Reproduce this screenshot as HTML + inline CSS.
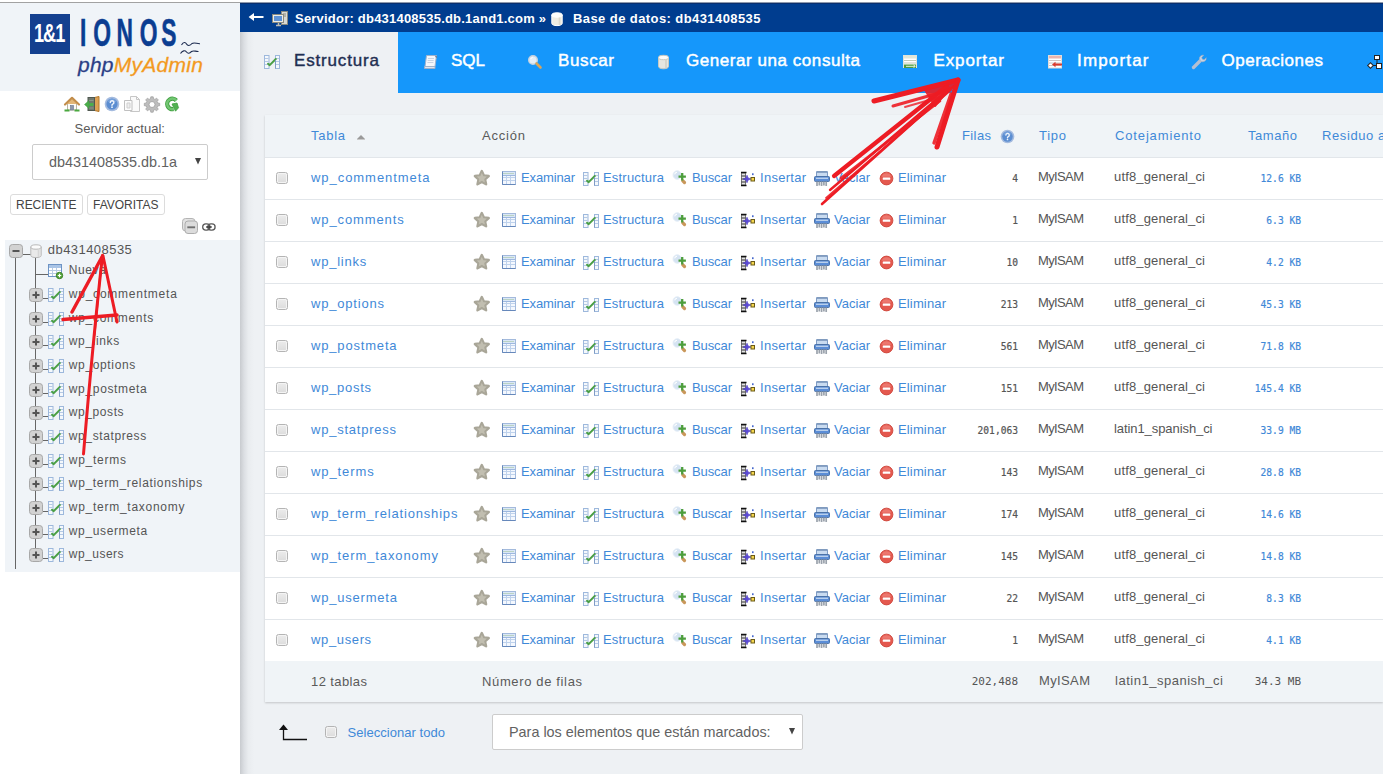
<!DOCTYPE html>
<html lang="es"><head><meta charset="utf-8"><title>phpMyAdmin</title>
<style>
html,body{margin:0;padding:0}
body{width:1383px;height:774px;overflow:hidden;position:relative;background:#fff;font-family:"Liberation Sans",sans-serif}
.t{position:absolute;white-space:pre;font-family:"Liberation Sans",sans-serif}
.m{font-family:"DejaVu Sans Mono","Liberation Mono",monospace}
.i{position:absolute;overflow:visible}
.b{position:absolute}
a{color:inherit;text-decoration:none}
.cb{position:absolute;width:10px;height:10px;border:1px solid #b4b4b4;border-radius:2.500px;background:linear-gradient(#ececec,#dcdcdc);box-shadow:inset 0 0 0 1px #f4f4f4}
</style></head><body>

<aside id="pma_navigation">
<div class="b" style="left:0;top:2px;width:240px;height:1px;background:#a2a2a2"></div>
<div class="b" style="left:240px;top:2px;width:1143px;height:1px;background:#8e99ad"></div>
<div class="b" style="left:0;top:3px;width:240px;height:87.500px;background:#f0f4f8"></div>
<div class="b" style="left:29.500px;top:14px;width:40.500px;height:40px;background:#14408f"></div>
<span class="t " style="left:33.5px;top:18px;font-size:26px;color:#fff;line-height:30px;letter-spacing:-1.5px;font-weight:700;transform:scaleX(.7);transform-origin:0 50%;">1&amp;1</span>
<span class="t " style="left:79.7px;top:11px;font-size:38px;color:#0b3d91;line-height:44px;font-weight:700;transform:scaleX(.6);transform-origin:0 50%;-webkit-text-stroke:.6px #0b3d91;"><span style="letter-spacing:11.500px">I</span><span style="letter-spacing:9.200px">O</span><span style="letter-spacing:11.500px">N</span><span style="letter-spacing:6.100px">O</span>S</span>
<svg class="i" style="left:180px;top:39.5px;" width="24" height="18" viewBox="0 0 24 18"><path d="M1.500 5c2-3.500 4-3 5-1s3.500 2 5.500-.5c2.500-1.500 5 .5 8 .2M.5 13.500c2-3 4.500-3.500 6-1.500s3 1.500 5-.5c2-1.500 4 .2 7 0" fill="none" stroke="#1d2b50" stroke-width="1.100"/></svg>
<span class="t " style="left:78px;top:53px;font-size:21px;color:#333;line-height:24px;letter-spacing:0.25px;-webkit-text-stroke:.3px;"><i style="color:#2b3f86">php</i><i style="color:#f39a1f">MyAdmin</i></span>
<svg class="i" style="left:64px;top:96px;" width="16" height="16" viewBox="0 0 16 16"><path d="M3.500 8v6h9V8" fill="#fbfaf6" stroke="#b9b3a3" stroke-width="1"/><path d="M8 2.500L2.500 8h11z" fill="#e3b676"/><path d="M1 8.500L8 1.800l7 6.700" fill="none" stroke="#c28d4a" stroke-width="2.200" stroke-linejoin="round" stroke-linecap="round"/><rect x="6.500" y="9.500" width="3" height="4.500" fill="#8d97ab" stroke="#6a748a" stroke-width=".6"/><path d="M.5 14.500h5M10.500 14.500h5" stroke="#4aa83f" stroke-width="2"/></svg>
<svg class="i" style="left:84px;top:96px;" width="16" height="16" viewBox="0 0 16 16"><path d="M10.500 1.500l4.500-1v15l-4.500-1z" fill="#dea255" stroke="#b3782a" stroke-width="1"/><rect x="4" y="1.500" width="6.500" height="13" fill="#6f786f" stroke="#4f584f" stroke-width="1"/><path d="M5 4.500h4.500M5 12h4.500" stroke="#8c968c" stroke-width="1"/><path d="M2 8.500h7.500" stroke="#4cae4c" stroke-width="3"/><path d="M5 4.500L.5 8.500 5 12.500z" fill="#4cae4c" stroke="#3a963a" stroke-width=".5"/></svg>
<svg class="i" style="left:103.5px;top:96px;" width="16" height="16" viewBox="0 0 16 16"><circle cx="8" cy="8" r="7.300" fill="#a4bbdf"/><circle cx="8" cy="8" r="5.600" fill="#5b8dd1"/><path d="M3.500 6a4.800 4.800 0 0 1 9 0" fill="#7fa8e0" opacity=".7"/><path d="M6.300 6.400a1.800 1.800 0 1 1 2.500 1.700c-.6.300-.8.600-.8 1.200" fill="none" stroke="#eef4fc" stroke-width="1.500" stroke-linecap="round"/><circle cx="8" cy="11.200" r=".9" fill="#eef4fc"/></svg>
<svg class="i" style="left:123.5px;top:96px;" width="16" height="16" viewBox="0 0 16 16"><path d="M6.500.5h6l3 3v12h-9z" fill="#fafafa" stroke="#c6c6c6" stroke-width="1"/><path d="M12.500.5v3h3" fill="none" stroke="#c6c6c6"/><path d="M.5 4.500h7.500v10h-7.500z" fill="#fcfcfc" stroke="#c0c0c0" stroke-width="1"/><path d="M3 7h3v5H3z" fill="#eee" stroke="#cfcfcf" stroke-width="1"/></svg>
<svg class="i" style="left:143.5px;top:96px;" width="16" height="16" viewBox="0 0 16 16"><g fill="#bdbdbd" stroke="#9c9c9c" stroke-width=".7"><path d="M6.800.8h2.400l.4 2 1.300.6 1.700-1.200 1.700 1.700-1.200 1.700.6 1.300 2 .4v2.400l-2 .4-.6 1.300 1.200 1.700-1.700 1.700-1.700-1.200-1.300.6-.4 2H6.800l-.4-2-1.300-.6-1.700 1.200-1.700-1.700 1.200-1.700-.6-1.300-2-.4V7.300l2-.4.6-1.300-1.200-1.700 1.700-1.700 1.700 1.200 1.300-.6z"/></g><circle cx="8" cy="8.500" r="3" fill="#fff" stroke="#9c9c9c" stroke-width=".8"/></svg>
<svg class="i" style="left:164px;top:96px;" width="16" height="16" viewBox="0 0 16 16"><path d="M12.300 4.500A5.200 5.200 0 1 0 9.500 13" fill="none" stroke="#3f9e3f" stroke-width="4.200" stroke-linecap="butt"/><path d="M12.300 4.500A5.200 5.200 0 1 0 9.500 13" fill="none" stroke="#72c672" stroke-width="2.400" stroke-linecap="butt"/><path d="M8 8l5-1 1.500 4.800-3 3.400z" fill="#52b152" stroke="#3f9e3f" stroke-width=".8"/></svg>
<span class="t " style="left:74.5px;top:121px;font-size:13px;color:#5a5a5a;line-height:16px;letter-spacing:0.011px;">Servidor actual:</span>
<div class="b" style="left:32px;top:144px;width:174px;height:34px;border:1px solid #ccc;border-radius:2px;background:#fff"></div>
<span class="t " style="left:49px;top:153px;font-size:14.4px;color:#626262;line-height:18px;">db431408535.db.1a</span>
<svg class="i" style="left:194.5px;top:158px;" width="6" height="6.5" viewBox="0 0 6 6.5"><path d="M0 0h6L3 6.500z" fill="#444"/></svg>
<div class="b" style="left:10px;top:194px;width:71px;height:19px;border:1px solid #dcdcdc;border-radius:3px;background:#fff"></div>
<div class="b" style="left:87px;top:194px;width:76px;height:19px;border:1px solid #dcdcdc;border-radius:3px;background:#fff"></div>
<span class="t " style="left:16px;top:197.8px;font-size:12px;color:#444;line-height:15px;letter-spacing:-0.027px;">RECIENTE</span>
<span class="t " style="left:93px;top:197.8px;font-size:12px;color:#444;line-height:15px;letter-spacing:-0.01px;">FAVORITAS</span>
<svg class="i" style="left:182px;top:217.7px;" width="16" height="16" viewBox="0 0 16 16"><rect x=".5" y=".5" width="12.500" height="12.500" rx="3" fill="#e2e2e2" stroke="#b4b4b4"/><rect x="3" y="3" width="12.500" height="12.500" rx="3" fill="#dcdcdc" stroke="#adadad"/><path d="M5.300 9.300h7.800" stroke="#707070" stroke-width="1.900"/></svg>
<svg class="i" style="left:202px;top:222.6px;" width="13.8" height="8" viewBox="0 0 13.8 8"><rect x=".7" y=".8" width="7.200" height="6.400" rx="3.100" fill="none" stroke="#5a5a5a" stroke-width="1.300"/><rect x="5.900" y=".8" width="7.200" height="6.400" rx="3.100" fill="none" stroke="#5a5a5a" stroke-width="1.300"/><path d="M4.200 4h5.500" stroke="#333" stroke-width="1.500"/></svg>
<div class="b" style="left:5px;top:240px;width:235px;height:331.500px;background:#f0f4f8"></div>
<div class="b" style="left:15px;top:257px;width:1px;height:312px;background:#666"></div>
<div class="b" style="left:35px;top:257px;width:1px;height:297px;background:#666"></div>
<div class="b" style="left:23px;top:253.500px;width:8px;height:1px;background:#666"></div>
<svg class="i" style="left:9px;top:244px;" width="14" height="14" viewBox="0 0 14 14"><rect x=".5" y=".5" width="13" height="13" rx="3" fill="#d2d2d2" stroke="#a8a8a8"/><path d="M3.500 7h7" stroke="#555" stroke-width="2"/></svg>
<svg class="i" style="left:30px;top:243.8px;" width="12" height="14" viewBox="0 0 12 14"><path d="M.8 3v8.500c0 1.300 2.400 2.100 5.200 2.100s5.200-.8 5.200-2.100V3z" fill="#e9e9e9" stroke="#b9b9b9" stroke-width="1"/><ellipse cx="6" cy="3" rx="5.200" ry="2.200" fill="#fbfbfb" stroke="#b9b9b9" stroke-width="1"/><path d="M8.500 5.500v7.500" stroke="#d6d6d6" stroke-width="1.600"/></svg>
<span class="t " style="left:47.8px;top:241.8px;font-size:13px;color:#555;line-height:16px;letter-spacing:0.447px;">db431408535</span>
<div class="b" style="left:36px;top:274px;width:12px;height:1px;background:#666"></div>
<svg class="i" style="left:48px;top:263.5px;" width="15" height="15" viewBox="0 0 15 15"><rect x=".5" y=".5" width="13" height="12" fill="#fff" stroke="#6d93c4"/><rect x="1" y="1" width="12" height="3" fill="#a9c4e6"/><path d="M1 6.500h12M1 9.500h12M4.500 4v8M8.500 4v8" stroke="#b8cbe3" stroke-width="1"/><circle cx="11.500" cy="11.500" r="3.200" fill="#58a83d" stroke="#3b7f27" stroke-width="1"/><path d="M11.500 9.800v3.400M9.800 11.500h3.400" stroke="#fff" stroke-width="1.200"/></svg>
<span class="t " style="left:68.8px;top:262.4px;font-size:12px;color:#555;line-height:16px;letter-spacing:0.6px;">Nueva</span>
<svg class="i" style="left:29px;top:288.0px;" width="14" height="14" viewBox="0 0 14 14"><rect x=".5" y=".5" width="13" height="13" rx="3" fill="#d2d2d2" stroke="#a8a8a8"/><path d="M3.500 7h7M7 3.500v7" stroke="#555" stroke-width="2"/></svg>
<div class="b" style="left:43px;top:298px;width:5px;height:1px;background:#666"></div>
<svg class="i" style="left:47.5px;top:287.0px;" width="16" height="16" viewBox="0 0 16 16"><rect x=".5" y="1.500" width="4.500" height="13" fill="#f4f8fc" stroke="#9db8dc" stroke-width="1"/><rect x="11.500" y="1.500" width="4" height="13" fill="#f4f8fc" stroke="#9db8dc" stroke-width="1"/><path d="M1 4.500h3.500M1 7.500h3.500M1 10.500h3.500M12 4.500h3M12 7.500h3M12 10.500h3" stroke="#b5c9e4" stroke-width="1"/><path d="M4 9.800l1.700 1.300L11.800 5" fill="none" stroke="#4a9f45" stroke-width="2" stroke-linecap="round" stroke-linejoin="round"/><path d="M11.500 6v8.500" stroke="#7f9cc4" stroke-width="1"/></svg>
<span class="t " style="left:68.8px;top:286.0px;font-size:12px;color:#555;line-height:16px;letter-spacing:0.769px;">wp_commentmeta</span>
<svg class="i" style="left:29px;top:311.6px;" width="14" height="14" viewBox="0 0 14 14"><rect x=".5" y=".5" width="13" height="13" rx="3" fill="#d2d2d2" stroke="#a8a8a8"/><path d="M3.500 7h7M7 3.500v7" stroke="#555" stroke-width="2"/></svg>
<div class="b" style="left:43px;top:322px;width:5px;height:1px;background:#666"></div>
<svg class="i" style="left:47.5px;top:310.6px;" width="16" height="16" viewBox="0 0 16 16"><rect x=".5" y="1.500" width="4.500" height="13" fill="#f4f8fc" stroke="#9db8dc" stroke-width="1"/><rect x="11.500" y="1.500" width="4" height="13" fill="#f4f8fc" stroke="#9db8dc" stroke-width="1"/><path d="M1 4.500h3.500M1 7.500h3.500M1 10.500h3.500M12 4.500h3M12 7.500h3M12 10.500h3" stroke="#b5c9e4" stroke-width="1"/><path d="M4 9.800l1.700 1.300L11.800 5" fill="none" stroke="#4a9f45" stroke-width="2" stroke-linecap="round" stroke-linejoin="round"/><path d="M11.500 6v8.500" stroke="#7f9cc4" stroke-width="1"/></svg>
<span class="t " style="left:68.8px;top:309.6px;font-size:12px;color:#555;line-height:16px;letter-spacing:0.707px;">wp_comments</span>
<svg class="i" style="left:29px;top:335.3px;" width="14" height="14" viewBox="0 0 14 14"><rect x=".5" y=".5" width="13" height="13" rx="3" fill="#d2d2d2" stroke="#a8a8a8"/><path d="M3.500 7h7M7 3.500v7" stroke="#555" stroke-width="2"/></svg>
<div class="b" style="left:43px;top:345px;width:5px;height:1px;background:#666"></div>
<svg class="i" style="left:47.5px;top:334.3px;" width="16" height="16" viewBox="0 0 16 16"><rect x=".5" y="1.500" width="4.500" height="13" fill="#f4f8fc" stroke="#9db8dc" stroke-width="1"/><rect x="11.500" y="1.500" width="4" height="13" fill="#f4f8fc" stroke="#9db8dc" stroke-width="1"/><path d="M1 4.500h3.500M1 7.500h3.500M1 10.500h3.500M12 4.500h3M12 7.500h3M12 10.500h3" stroke="#b5c9e4" stroke-width="1"/><path d="M4 9.800l1.700 1.300L11.800 5" fill="none" stroke="#4a9f45" stroke-width="2" stroke-linecap="round" stroke-linejoin="round"/><path d="M11.500 6v8.500" stroke="#7f9cc4" stroke-width="1"/></svg>
<span class="t " style="left:68.8px;top:333.3px;font-size:12px;color:#555;line-height:16px;letter-spacing:0.621px;">wp_links</span>
<svg class="i" style="left:29px;top:358.9px;" width="14" height="14" viewBox="0 0 14 14"><rect x=".5" y=".5" width="13" height="13" rx="3" fill="#d2d2d2" stroke="#a8a8a8"/><path d="M3.500 7h7M7 3.500v7" stroke="#555" stroke-width="2"/></svg>
<div class="b" style="left:43px;top:369px;width:5px;height:1px;background:#666"></div>
<svg class="i" style="left:47.5px;top:357.9px;" width="16" height="16" viewBox="0 0 16 16"><rect x=".5" y="1.500" width="4.500" height="13" fill="#f4f8fc" stroke="#9db8dc" stroke-width="1"/><rect x="11.500" y="1.500" width="4" height="13" fill="#f4f8fc" stroke="#9db8dc" stroke-width="1"/><path d="M1 4.500h3.500M1 7.500h3.500M1 10.500h3.500M12 4.500h3M12 7.500h3M12 10.500h3" stroke="#b5c9e4" stroke-width="1"/><path d="M4 9.800l1.700 1.300L11.800 5" fill="none" stroke="#4a9f45" stroke-width="2" stroke-linecap="round" stroke-linejoin="round"/><path d="M11.500 6v8.500" stroke="#7f9cc4" stroke-width="1"/></svg>
<span class="t " style="left:68.8px;top:356.9px;font-size:12px;color:#555;line-height:16px;letter-spacing:0.643px;">wp_options</span>
<svg class="i" style="left:29px;top:382.6px;" width="14" height="14" viewBox="0 0 14 14"><rect x=".5" y=".5" width="13" height="13" rx="3" fill="#d2d2d2" stroke="#a8a8a8"/><path d="M3.500 7h7M7 3.500v7" stroke="#555" stroke-width="2"/></svg>
<div class="b" style="left:43px;top:393px;width:5px;height:1px;background:#666"></div>
<svg class="i" style="left:47.5px;top:381.6px;" width="16" height="16" viewBox="0 0 16 16"><rect x=".5" y="1.500" width="4.500" height="13" fill="#f4f8fc" stroke="#9db8dc" stroke-width="1"/><rect x="11.500" y="1.500" width="4" height="13" fill="#f4f8fc" stroke="#9db8dc" stroke-width="1"/><path d="M1 4.500h3.500M1 7.500h3.500M1 10.500h3.500M12 4.500h3M12 7.500h3M12 10.500h3" stroke="#b5c9e4" stroke-width="1"/><path d="M4 9.800l1.700 1.300L11.800 5" fill="none" stroke="#4a9f45" stroke-width="2" stroke-linecap="round" stroke-linejoin="round"/><path d="M11.500 6v8.500" stroke="#7f9cc4" stroke-width="1"/></svg>
<span class="t " style="left:68.8px;top:380.6px;font-size:12px;color:#555;line-height:16px;letter-spacing:0.661px;">wp_postmeta</span>
<svg class="i" style="left:29px;top:406.2px;" width="14" height="14" viewBox="0 0 14 14"><rect x=".5" y=".5" width="13" height="13" rx="3" fill="#d2d2d2" stroke="#a8a8a8"/><path d="M3.500 7h7M7 3.500v7" stroke="#555" stroke-width="2"/></svg>
<div class="b" style="left:43px;top:416px;width:5px;height:1px;background:#666"></div>
<svg class="i" style="left:47.5px;top:405.2px;" width="16" height="16" viewBox="0 0 16 16"><rect x=".5" y="1.500" width="4.500" height="13" fill="#f4f8fc" stroke="#9db8dc" stroke-width="1"/><rect x="11.500" y="1.500" width="4" height="13" fill="#f4f8fc" stroke="#9db8dc" stroke-width="1"/><path d="M1 4.500h3.500M1 7.500h3.500M1 10.500h3.500M12 4.500h3M12 7.500h3M12 10.500h3" stroke="#b5c9e4" stroke-width="1"/><path d="M4 9.800l1.700 1.300L11.800 5" fill="none" stroke="#4a9f45" stroke-width="2" stroke-linecap="round" stroke-linejoin="round"/><path d="M11.500 6v8.500" stroke="#7f9cc4" stroke-width="1"/></svg>
<span class="t " style="left:68.8px;top:404.2px;font-size:12px;color:#555;line-height:16px;letter-spacing:0.578px;">wp_posts</span>
<svg class="i" style="left:29px;top:429.9px;" width="14" height="14" viewBox="0 0 14 14"><rect x=".5" y=".5" width="13" height="13" rx="3" fill="#d2d2d2" stroke="#a8a8a8"/><path d="M3.500 7h7M7 3.500v7" stroke="#555" stroke-width="2"/></svg>
<div class="b" style="left:43px;top:440px;width:5px;height:1px;background:#666"></div>
<svg class="i" style="left:47.5px;top:428.9px;" width="16" height="16" viewBox="0 0 16 16"><rect x=".5" y="1.500" width="4.500" height="13" fill="#f4f8fc" stroke="#9db8dc" stroke-width="1"/><rect x="11.500" y="1.500" width="4" height="13" fill="#f4f8fc" stroke="#9db8dc" stroke-width="1"/><path d="M1 4.500h3.500M1 7.500h3.500M1 10.500h3.500M12 4.500h3M12 7.500h3M12 10.500h3" stroke="#b5c9e4" stroke-width="1"/><path d="M4 9.800l1.700 1.300L11.800 5" fill="none" stroke="#4a9f45" stroke-width="2" stroke-linecap="round" stroke-linejoin="round"/><path d="M11.500 6v8.500" stroke="#7f9cc4" stroke-width="1"/></svg>
<span class="t " style="left:68.8px;top:427.9px;font-size:12px;color:#555;line-height:16px;letter-spacing:0.612px;">wp_statpress</span>
<svg class="i" style="left:29px;top:453.5px;" width="14" height="14" viewBox="0 0 14 14"><rect x=".5" y=".5" width="13" height="13" rx="3" fill="#d2d2d2" stroke="#a8a8a8"/><path d="M3.500 7h7M7 3.500v7" stroke="#555" stroke-width="2"/></svg>
<div class="b" style="left:43px;top:464px;width:5px;height:1px;background:#666"></div>
<svg class="i" style="left:47.5px;top:452.5px;" width="16" height="16" viewBox="0 0 16 16"><rect x=".5" y="1.500" width="4.500" height="13" fill="#f4f8fc" stroke="#9db8dc" stroke-width="1"/><rect x="11.500" y="1.500" width="4" height="13" fill="#f4f8fc" stroke="#9db8dc" stroke-width="1"/><path d="M1 4.500h3.500M1 7.500h3.500M1 10.500h3.500M12 4.500h3M12 7.500h3M12 10.500h3" stroke="#b5c9e4" stroke-width="1"/><path d="M4 9.800l1.700 1.300L11.800 5" fill="none" stroke="#4a9f45" stroke-width="2" stroke-linecap="round" stroke-linejoin="round"/><path d="M11.500 6v8.500" stroke="#7f9cc4" stroke-width="1"/></svg>
<span class="t " style="left:68.8px;top:451.5px;font-size:12px;color:#555;line-height:16px;letter-spacing:0.729px;">wp_terms</span>
<svg class="i" style="left:29px;top:477.2px;" width="14" height="14" viewBox="0 0 14 14"><rect x=".5" y=".5" width="13" height="13" rx="3" fill="#d2d2d2" stroke="#a8a8a8"/><path d="M3.500 7h7M7 3.500v7" stroke="#555" stroke-width="2"/></svg>
<div class="b" style="left:43px;top:487px;width:5px;height:1px;background:#666"></div>
<svg class="i" style="left:47.5px;top:476.2px;" width="16" height="16" viewBox="0 0 16 16"><rect x=".5" y="1.500" width="4.500" height="13" fill="#f4f8fc" stroke="#9db8dc" stroke-width="1"/><rect x="11.500" y="1.500" width="4" height="13" fill="#f4f8fc" stroke="#9db8dc" stroke-width="1"/><path d="M1 4.500h3.500M1 7.500h3.500M1 10.500h3.500M12 4.500h3M12 7.500h3M12 10.500h3" stroke="#b5c9e4" stroke-width="1"/><path d="M4 9.800l1.700 1.300L11.800 5" fill="none" stroke="#4a9f45" stroke-width="2" stroke-linecap="round" stroke-linejoin="round"/><path d="M11.500 6v8.500" stroke="#7f9cc4" stroke-width="1"/></svg>
<span class="t " style="left:68.8px;top:475.2px;font-size:12px;color:#555;line-height:16px;letter-spacing:0.665px;">wp_term_relationships</span>
<svg class="i" style="left:29px;top:500.9px;" width="14" height="14" viewBox="0 0 14 14"><rect x=".5" y=".5" width="13" height="13" rx="3" fill="#d2d2d2" stroke="#a8a8a8"/><path d="M3.500 7h7M7 3.500v7" stroke="#555" stroke-width="2"/></svg>
<div class="b" style="left:43px;top:511px;width:5px;height:1px;background:#666"></div>
<svg class="i" style="left:47.5px;top:499.9px;" width="16" height="16" viewBox="0 0 16 16"><rect x=".5" y="1.500" width="4.500" height="13" fill="#f4f8fc" stroke="#9db8dc" stroke-width="1"/><rect x="11.500" y="1.500" width="4" height="13" fill="#f4f8fc" stroke="#9db8dc" stroke-width="1"/><path d="M1 4.500h3.500M1 7.500h3.500M1 10.500h3.500M12 4.500h3M12 7.500h3M12 10.500h3" stroke="#b5c9e4" stroke-width="1"/><path d="M4 9.800l1.700 1.300L11.800 5" fill="none" stroke="#4a9f45" stroke-width="2" stroke-linecap="round" stroke-linejoin="round"/><path d="M11.500 6v8.500" stroke="#7f9cc4" stroke-width="1"/></svg>
<span class="t " style="left:68.8px;top:498.9px;font-size:12px;color:#555;line-height:16px;letter-spacing:0.732px;">wp_term_taxonomy</span>
<svg class="i" style="left:29px;top:524.5px;" width="14" height="14" viewBox="0 0 14 14"><rect x=".5" y=".5" width="13" height="13" rx="3" fill="#d2d2d2" stroke="#a8a8a8"/><path d="M3.500 7h7M7 3.500v7" stroke="#555" stroke-width="2"/></svg>
<div class="b" style="left:43px;top:534px;width:5px;height:1px;background:#666"></div>
<svg class="i" style="left:47.5px;top:523.5px;" width="16" height="16" viewBox="0 0 16 16"><rect x=".5" y="1.500" width="4.500" height="13" fill="#f4f8fc" stroke="#9db8dc" stroke-width="1"/><rect x="11.500" y="1.500" width="4" height="13" fill="#f4f8fc" stroke="#9db8dc" stroke-width="1"/><path d="M1 4.500h3.500M1 7.500h3.500M1 10.500h3.500M12 4.500h3M12 7.500h3M12 10.500h3" stroke="#b5c9e4" stroke-width="1"/><path d="M4 9.800l1.700 1.300L11.800 5" fill="none" stroke="#4a9f45" stroke-width="2" stroke-linecap="round" stroke-linejoin="round"/><path d="M11.500 6v8.500" stroke="#7f9cc4" stroke-width="1"/></svg>
<span class="t " style="left:68.8px;top:522.5px;font-size:12px;color:#555;line-height:16px;letter-spacing:0.63px;">wp_usermeta</span>
<svg class="i" style="left:29px;top:548.1px;" width="14" height="14" viewBox="0 0 14 14"><rect x=".5" y=".5" width="13" height="13" rx="3" fill="#d2d2d2" stroke="#a8a8a8"/><path d="M3.500 7h7M7 3.500v7" stroke="#555" stroke-width="2"/></svg>
<div class="b" style="left:43px;top:558px;width:5px;height:1px;background:#666"></div>
<svg class="i" style="left:47.5px;top:547.1px;" width="16" height="16" viewBox="0 0 16 16"><rect x=".5" y="1.500" width="4.500" height="13" fill="#f4f8fc" stroke="#9db8dc" stroke-width="1"/><rect x="11.500" y="1.500" width="4" height="13" fill="#f4f8fc" stroke="#9db8dc" stroke-width="1"/><path d="M1 4.500h3.500M1 7.500h3.500M1 10.500h3.500M12 4.500h3M12 7.500h3M12 10.500h3" stroke="#b5c9e4" stroke-width="1"/><path d="M4 9.800l1.700 1.300L11.800 5" fill="none" stroke="#4a9f45" stroke-width="2" stroke-linecap="round" stroke-linejoin="round"/><path d="M11.500 6v8.500" stroke="#7f9cc4" stroke-width="1"/></svg>
<span class="t " style="left:68.8px;top:546.1px;font-size:12px;color:#555;line-height:16px;letter-spacing:0.485px;">wp_users</span>
</aside>
<main id="page_content">
<div class="b" style="left:240px;top:32px;width:1143px;height:742px;background:#eef1f4"></div>
<div class="b" style="left:240px;top:32px;width:14px;height:742px;background:linear-gradient(90deg,#c8cbcf,#dcdfe3 30%,#e9ecef 60%,#eef1f4)"></div>
<div class="b" style="left:240px;top:3px;width:1143px;height:29px;background:#003d8f"></div>
<div class="b" style="left:240px;top:3px;width:1143px;height:1px;background:#0a2f6e"></div>
<svg class="i" style="left:248px;top:11px;" width="16" height="12" viewBox="0 0 16 12"><path d="M2 6h13.500" stroke="#fff" stroke-width="2"/><path d="M6 2L.6 6 6 10z" fill="#fff"/></svg>
<svg class="i" style="left:272px;top:10.8px;" width="16" height="16" viewBox="0 0 16 16"><rect x="9.500" y=".5" width="6" height="13" fill="#d9d9d2" stroke="#8a8a80"/><path d="M11 3h3M11 5h3" stroke="#8a8a80"/><rect x=".5" y="3.500" width="11" height="8" fill="#ecece6" stroke="#8a8a80"/><rect x="2" y="5" width="8" height="5" fill="#5f93d6"/><path d="M4 14.500h5M6.500 12v2.500" stroke="#bdbdb5" stroke-width="1.500"/></svg>
<span class="t " style="left:295px;top:9.6px;font-size:13px;color:#fff;line-height:18px;letter-spacing:0.214px;font-weight:700;">Servidor: db431408535.db.1and1.com »</span>
<svg class="i" style="left:551px;top:12px;" width="12" height="14" viewBox="0 0 12 14"><path d="M.8 3v8.500c0 1.300 2.400 2.100 5.200 2.100s5.200-.8 5.200-2.100V3z" fill="#eeece2" stroke="#fff" stroke-width="1"/><ellipse cx="6" cy="3" rx="5.200" ry="2.200" fill="#fdfdfa" stroke="#fff" stroke-width="1"/><path d="M8.500 5.500v7.500" stroke="#dcd9cc" stroke-width="1.600"/></svg>
<span class="t " style="left:573px;top:9.6px;font-size:13px;color:#fff;line-height:18px;letter-spacing:0.418px;font-weight:700;">Base de datos: db431408535</span>
<div class="b" style="left:398px;top:32px;width:985px;height:60.500px;background:#1597fb"></div>
<svg class="i" style="left:264px;top:54px;" width="16" height="16" viewBox="0 0 16 16"><rect x=".5" y="1.500" width="4.500" height="13" fill="#f4f8fc" stroke="#9db8dc" stroke-width="1"/><rect x="11.500" y="1.500" width="4" height="13" fill="#f4f8fc" stroke="#9db8dc" stroke-width="1"/><path d="M1 4.500h3.500M1 7.500h3.500M1 10.500h3.500M12 4.500h3M12 7.500h3M12 10.500h3" stroke="#b5c9e4" stroke-width="1"/><path d="M4 9.800l1.700 1.300L11.800 5" fill="none" stroke="#4a9f45" stroke-width="2" stroke-linecap="round" stroke-linejoin="round"/><path d="M11.500 6v8.500" stroke="#7f9cc4" stroke-width="1"/></svg>
<span class="t " style="left:294px;top:49.1px;font-size:17px;color:#1f2f52;line-height:24px;letter-spacing:0.835px;-webkit-text-stroke:.4px;">Estructura</span>
<svg class="i" style="left:423px;top:54px;" width="16" height="16" viewBox="0 0 16 16"><path d="M3.500 1.500h10l-1.500 11h-10z" fill="#f4f7fb" stroke="#9fb2cc" stroke-width="1"/><path d="M1.500 12.500h10.500v2h-10.500z" fill="#dfe6ef" stroke="#9fb2cc" stroke-width="1"/><path d="M5 4.500h6M4.700 6.500h6M4.400 8.500h6" stroke="#c9d4e3" stroke-width="1"/><path d="M12.500 2l1.500 1.500" stroke="#6b7f99" stroke-width="1.500"/></svg>
<span class="t " style="left:451px;top:49.1px;font-size:17px;color:#fff;line-height:24px;letter-spacing:-0.016px;-webkit-text-stroke:.45px;">SQL</span>
<svg class="i" style="left:527px;top:54px;" width="16" height="16" viewBox="0 0 16 16"><circle cx="6" cy="6" r="4.300" fill="#e1edf8" stroke="#c4d2e0" stroke-width="1.400"/><path d="M9.500 9.500l4 4" stroke="#d9a55a" stroke-width="2.600" stroke-linecap="round"/><path d="M3.800 5a2.600 2.600 0 0 1 2-1.800" stroke="#fff" stroke-width="1" fill="none"/></svg>
<span class="t " style="left:558px;top:49.1px;font-size:17px;color:#fff;line-height:24px;letter-spacing:0.616px;-webkit-text-stroke:.45px;">Buscar</span>
<svg class="i" style="left:657px;top:54px;" width="16" height="16" viewBox="0 0 16 16"><path d="M1.500 3.500v9c0 1.400 2.500 2.300 5 2.300s5-.9 5-2.300v-9z" fill="#e6e6e0" stroke="#c9c9c0" stroke-width="1"/><ellipse cx="6.500" cy="3.500" rx="5" ry="2.200" fill="#fbfbf8" stroke="#c9c9c0" stroke-width="1"/><path d="M9 6v8" stroke="#cfcfc6" stroke-width="1.500"/></svg>
<span class="t " style="left:686px;top:49.1px;font-size:17px;color:#fff;line-height:24px;letter-spacing:0.553px;-webkit-text-stroke:.45px;">Generar una consulta</span>
<svg class="i" style="left:902px;top:54px;" width="16" height="16" viewBox="0 0 16 16"><rect x="1.500" y="1.500" width="13" height="12" fill="#fff" stroke="#dfe3da"/><rect x="2" y="2" width="12" height="2.500" fill="#dfe6d8"/><path d="M2 6.500h12M2 9h12" stroke="#c2cbb8" stroke-width="1"/><rect x="2" y="10.500" width="12" height="3.500" fill="#4c9a3e"/><path d="M4 12.300h9M11.500 11l1.800 1.300-1.800 1.300" stroke="#e6f5e0" stroke-width="1" fill="none"/></svg>
<span class="t " style="left:933.5px;top:49.1px;font-size:17px;color:#fff;line-height:24px;letter-spacing:0.893px;-webkit-text-stroke:.45px;">Exportar</span>
<svg class="i" style="left:1047px;top:54px;" width="16" height="16" viewBox="0 0 16 16"><rect x="1.500" y="1.500" width="13" height="12.500" fill="#fff" stroke="#e3dcd8"/><rect x="2" y="2" width="12" height="2.500" fill="#e9b4ae"/><path d="M2 6.500h12M2 9h12M2 11.500h12" stroke="#d2c6c2" stroke-width="1"/><path d="M7 10.500h8" stroke="#dc3a2e" stroke-width="2"/><path d="M8.500 7.800L5 10.500l3.500 2.700z" fill="#dc3a2e"/></svg>
<span class="t " style="left:1077px;top:49.1px;font-size:17px;color:#fff;line-height:24px;letter-spacing:1.172px;-webkit-text-stroke:.45px;">Importar</span>
<svg class="i" style="left:1191px;top:54px;" width="16" height="16" viewBox="0 0 16 16"><path d="M2.500 13.500l7.500-7.500" stroke="#b3bfd2" stroke-width="3.400" stroke-linecap="round"/><path d="M9.300 6.700a3.500 3.500 0 0 1 .6-4.900 3.500 3.500 0 0 1 2.900-.5l-2.100 2.100.6 1.800 1.800.6 2.100-2.100a3.500 3.500 0 0 1-5.400 3.500z" fill="#c9d3e2" stroke="#9aa8bd" stroke-width=".6"/></svg>
<span class="t " style="left:1221.5px;top:49.1px;font-size:17px;color:#fff;line-height:24px;letter-spacing:0.511px;-webkit-text-stroke:.45px;">Operaciones</span>
<svg class="i" style="left:1367px;top:54px;" width="16" height="16" viewBox="0 0 16 16"><rect x="7.500" y="1.500" width="5" height="4" fill="#fff" stroke="#222"/><rect x="1.500" y="9.500" width="4" height="4" fill="#fff" stroke="#222" transform="rotate(45 3.500 11.500)"/><rect x="9.500" y="9.500" width="5" height="5" fill="#fff" stroke="#222"/><path d="M10 5.500v4M6 11.500h3.500" stroke="#222"/></svg>
<div class="b" style="left:265px;top:115px;width:1118px;height:587px;background:#fff;box-shadow:0 1px 2px rgba(0,0,0,.18)"></div>
<div class="b" style="left:265px;top:115px;width:1118px;height:42px;background:#f0f4f7"></div>
<div class="b" style="left:265px;top:660.500px;width:1118px;height:41.500px;background:#f0f4f7"></div>
<span class="t " style="left:311px;top:128px;font-size:13px;color:#3f89d8;line-height:16px;letter-spacing:0.73px;">Tabla</span>
<svg class="i" style="left:357px;top:135px;" width="8" height="5" viewBox="0 0 8 5"><path d="M0 4L4 0l4 4z" fill="#9a9a9a"/><path d="M0 4.500h8" stroke="#c8c8c8"/></svg>
<span class="t " style="left:482px;top:128px;font-size:13px;color:#5a5a5a;line-height:16px;letter-spacing:0.794px;">Acción</span>
<span class="t " style="left:962px;top:128px;font-size:13px;color:#3f89d8;line-height:16px;letter-spacing:0.387px;">Filas</span>
<svg class="i" style="left:1000px;top:129px;" width="15" height="15" viewBox="0 0 16 16"><circle cx="8" cy="8" r="7.300" fill="#a4bbdf"/><circle cx="8" cy="8" r="5.600" fill="#5b8dd1"/><path d="M3.500 6a4.800 4.800 0 0 1 9 0" fill="#7fa8e0" opacity=".7"/><path d="M6.300 6.400a1.800 1.800 0 1 1 2.500 1.700c-.6.300-.8.600-.8 1.200" fill="none" stroke="#eef4fc" stroke-width="1.500" stroke-linecap="round"/><circle cx="8" cy="11.200" r=".9" fill="#eef4fc"/></svg>
<span class="t " style="left:1039px;top:128px;font-size:13px;color:#3f89d8;line-height:16px;letter-spacing:0.729px;">Tipo</span>
<span class="t " style="left:1115px;top:128px;font-size:13px;color:#3f89d8;line-height:16px;letter-spacing:0.854px;">Cotejamiento</span>
<span class="t " style="left:1248px;top:128px;font-size:13px;color:#3f89d8;line-height:16px;letter-spacing:0.55px;">Tamaño</span>
<span class="t " style="left:1322px;top:128px;font-size:13px;color:#3f89d8;line-height:16px;letter-spacing:0.6px;">Residuo a depurar</span>
<div class="b" style="left:265px;top:157px;width:1118px;height:1px;background:#e2e6ea"></div>
<div class="cb" style="left:276px;top:172px"></div>
<span class="t " style="left:311px;top:170px;font-size:13px;color:#3f89d8;line-height:16px;letter-spacing:0.952px;">wp_commentmeta</span>
<svg class="i" style="left:472.7px;top:168.8px;" width="17.6" height="17.6" viewBox="0 0 16 16"><path d="M8 1.800l1.900 4.100 4.400.5-3.300 3.100.9 4.400L8 11.700l-3.900 2.200.9-4.400L1.700 6.400l4.400-.5z" fill="#bab7a9" stroke="#a9a698" stroke-width="2.200" stroke-linejoin="round"/><path d="M8 3.500l1.400 3 3.200.4-2.400 2.200.6 3.200L8 10.700l-2.800 1.600.6-3.200L3.400 6.900l3.200-.4z" fill="#c1beb0"/></svg>
<svg class="i" style="left:501.2px;top:169.9px;" width="16" height="16" viewBox="0 0 16 16"><rect x="1.500" y="1.500" width="13" height="13" fill="#f4f8fe" stroke="#a3badc"/><rect x="2" y="2" width="12" height="3" fill="#dbe7f7"/><path d="M2 3.500h11" stroke="#b9d3c4" stroke-width="1"/><path d="M2 7.500h12M2 10.500h12M5.500 5.500v9M9.500 5.500v9" stroke="#bfd2ec" stroke-width="1"/><path d="M2 5.500h12" stroke="#9db8de"/><path d="M1.500 1.500v13h13" fill="none" stroke="#6688bb"/></svg>
<span class="t " style="left:521px;top:170px;font-size:13px;color:#3f89d8;line-height:16px;letter-spacing:-0.132px;">Examinar</span>
<svg class="i" style="left:583px;top:170.5px;" width="16" height="16" viewBox="0 0 16 16"><rect x=".5" y="1.500" width="4.500" height="13" fill="#f4f8fc" stroke="#9db8dc" stroke-width="1"/><rect x="11.500" y="1.500" width="4" height="13" fill="#f4f8fc" stroke="#9db8dc" stroke-width="1"/><path d="M1 4.500h3.500M1 7.500h3.500M1 10.500h3.500M12 4.500h3M12 7.500h3M12 10.500h3" stroke="#b5c9e4" stroke-width="1"/><path d="M4 9.800l1.700 1.300L11.800 5" fill="none" stroke="#4a9f45" stroke-width="2" stroke-linecap="round" stroke-linejoin="round"/><path d="M11.500 6v8.500" stroke="#7f9cc4" stroke-width="1"/></svg>
<span class="t " style="left:603px;top:170px;font-size:13px;color:#3f89d8;line-height:16px;letter-spacing:0.194px;">Estructura</span>
<svg class="i" style="left:672px;top:170px;" width="16" height="16" viewBox="0 0 16 16"><circle cx="5.300" cy="5" r="4.200" fill="#d5e3f2" stroke="#e3ecf6" stroke-width="1"/><path d="M2.600 4.300a2.800 2.800 0 0 1 2.400-2" stroke="#fff" stroke-width="1.100" fill="none"/><path d="M10.800 10.800l1.700 1.700" stroke="#c9975a" stroke-width="3.200" stroke-linecap="round"/><path d="M10.200 3v7.400M6.500 6.700h7.400" stroke="#4d9e3d" stroke-width="2.300"/></svg>
<span class="t " style="left:692px;top:170px;font-size:13px;color:#3f89d8;line-height:16px;letter-spacing:-0.094px;">Buscar</span>
<svg class="i" style="left:740px;top:170.5px;" width="16" height="16" viewBox="0 0 16 16"><rect x="1.500" y="2" width="4" height="12" fill="#e4e4e4" stroke="#777" stroke-width="1"/><path d="M1 1.500h5.500M1 14.500h5.500" stroke="#111" stroke-width="1.700"/><path d="M1.500 5h4M1.500 8h4M1.500 11h4" stroke="#333" stroke-width="1"/><path d="M7 4.200l1.100 2.700 2.900 1.100-2.900 1.100-1.100 2.700-1.100-2.700L3 8l2.900-1.100z" fill="#5b4ad6" stroke="#4a3bc0" stroke-width=".6"/><rect x="11" y="6.500" width="3.500" height="3.500" fill="#f4d64e" stroke="#6b5a16" stroke-width="1"/><rect x="12" y="2.300" width="1.600" height="1.800" fill="#4466cc"/></svg>
<span class="t " style="left:760px;top:170px;font-size:13px;color:#3f89d8;line-height:16px;letter-spacing:0.275px;">Insertar</span>
<svg class="i" style="left:814px;top:170.5px;" width="16" height="16" viewBox="0 0 16 16"><rect x="2.500" y=".8" width="11" height="5.200" fill="#c9dbf0" stroke="#7f9cc4" stroke-width="1"/><path d="M3 1h10" stroke="#5f7fa8" stroke-width="1"/><rect x=".5" y="5.500" width="15" height="5" rx="1" fill="#5b8dd6" stroke="#4a72a8" stroke-width="1"/><path d="M2 7.300h12" stroke="#b9d0ec" stroke-width="1.400"/><path d="M3 10.500v4.500M5.300 10.500v4M7.600 10.500v4.500M9.900 10.500v4M12.200 10.500v4.500" stroke="#9aa2ac" stroke-width="1.700"/></svg>
<span class="t " style="left:834px;top:170px;font-size:13px;color:#3f89d8;line-height:16px;letter-spacing:0.022px;">Vaciar</span>
<svg class="i" style="left:879px;top:170.5px;" width="15" height="15" viewBox="0 0 16 16"><circle cx="8" cy="8" r="6.800" fill="#e4584e" stroke="#cf463c" stroke-width="1"/><path d="M2.800 6a5.500 5.500 0 0 1 10.400 0" fill="#ef8279" opacity=".75"/><rect x="4" y="6.800" width="8" height="2.600" rx=".6" fill="#fff"/></svg>
<span class="t " style="left:898px;top:170px;font-size:13px;color:#3f89d8;line-height:16px;letter-spacing:0.147px;">Eliminar</span>
<span class="t m" style="right:365px;top:170.5px;font-size:9.600px;color:#555;line-height:16px;-webkit-text-stroke:.2px;">4</span>
<span class="t " style="left:1038px;top:168.5px;font-size:13px;color:#555;line-height:16px;letter-spacing:-0.625px;">MyISAM</span>
<span class="t " style="left:1114px;top:168.5px;font-size:13px;color:#555;line-height:16px;letter-spacing:0.15px;">utf8_general_ci</span>
<span class="t m" style="right:82px;top:170.5px;font-size:9.600px;color:#3f89d8;line-height:16px;-webkit-text-stroke:.2px;">12.6 KB</span>
<div class="b" style="left:265px;top:199px;width:1118px;height:1px;background:#e2e6ea"></div>
<div class="cb" style="left:276px;top:214px"></div>
<span class="t " style="left:311px;top:212px;font-size:13px;color:#3f89d8;line-height:16px;letter-spacing:0.889px;">wp_comments</span>
<svg class="i" style="left:472.7px;top:210.8px;" width="17.6" height="17.6" viewBox="0 0 16 16"><path d="M8 1.800l1.900 4.100 4.400.5-3.300 3.100.9 4.400L8 11.700l-3.900 2.200.9-4.400L1.700 6.400l4.400-.5z" fill="#bab7a9" stroke="#a9a698" stroke-width="2.200" stroke-linejoin="round"/><path d="M8 3.500l1.400 3 3.200.4-2.400 2.200.6 3.200L8 10.700l-2.800 1.600.6-3.200L3.400 6.900l3.200-.4z" fill="#c1beb0"/></svg>
<svg class="i" style="left:501.2px;top:211.9px;" width="16" height="16" viewBox="0 0 16 16"><rect x="1.500" y="1.500" width="13" height="13" fill="#f4f8fe" stroke="#a3badc"/><rect x="2" y="2" width="12" height="3" fill="#dbe7f7"/><path d="M2 3.500h11" stroke="#b9d3c4" stroke-width="1"/><path d="M2 7.500h12M2 10.500h12M5.500 5.500v9M9.500 5.500v9" stroke="#bfd2ec" stroke-width="1"/><path d="M2 5.500h12" stroke="#9db8de"/><path d="M1.500 1.500v13h13" fill="none" stroke="#6688bb"/></svg>
<span class="t " style="left:521px;top:212px;font-size:13px;color:#3f89d8;line-height:16px;letter-spacing:-0.132px;">Examinar</span>
<svg class="i" style="left:583px;top:212.5px;" width="16" height="16" viewBox="0 0 16 16"><rect x=".5" y="1.500" width="4.500" height="13" fill="#f4f8fc" stroke="#9db8dc" stroke-width="1"/><rect x="11.500" y="1.500" width="4" height="13" fill="#f4f8fc" stroke="#9db8dc" stroke-width="1"/><path d="M1 4.500h3.500M1 7.500h3.500M1 10.500h3.500M12 4.500h3M12 7.500h3M12 10.500h3" stroke="#b5c9e4" stroke-width="1"/><path d="M4 9.800l1.700 1.300L11.800 5" fill="none" stroke="#4a9f45" stroke-width="2" stroke-linecap="round" stroke-linejoin="round"/><path d="M11.500 6v8.500" stroke="#7f9cc4" stroke-width="1"/></svg>
<span class="t " style="left:603px;top:212px;font-size:13px;color:#3f89d8;line-height:16px;letter-spacing:0.194px;">Estructura</span>
<svg class="i" style="left:672px;top:212px;" width="16" height="16" viewBox="0 0 16 16"><circle cx="5.300" cy="5" r="4.200" fill="#d5e3f2" stroke="#e3ecf6" stroke-width="1"/><path d="M2.600 4.300a2.800 2.800 0 0 1 2.400-2" stroke="#fff" stroke-width="1.100" fill="none"/><path d="M10.800 10.800l1.700 1.700" stroke="#c9975a" stroke-width="3.200" stroke-linecap="round"/><path d="M10.200 3v7.400M6.500 6.700h7.400" stroke="#4d9e3d" stroke-width="2.300"/></svg>
<span class="t " style="left:692px;top:212px;font-size:13px;color:#3f89d8;line-height:16px;letter-spacing:-0.094px;">Buscar</span>
<svg class="i" style="left:740px;top:212.5px;" width="16" height="16" viewBox="0 0 16 16"><rect x="1.500" y="2" width="4" height="12" fill="#e4e4e4" stroke="#777" stroke-width="1"/><path d="M1 1.500h5.500M1 14.500h5.500" stroke="#111" stroke-width="1.700"/><path d="M1.500 5h4M1.500 8h4M1.500 11h4" stroke="#333" stroke-width="1"/><path d="M7 4.200l1.100 2.700 2.900 1.100-2.900 1.100-1.100 2.700-1.100-2.700L3 8l2.900-1.100z" fill="#5b4ad6" stroke="#4a3bc0" stroke-width=".6"/><rect x="11" y="6.500" width="3.500" height="3.500" fill="#f4d64e" stroke="#6b5a16" stroke-width="1"/><rect x="12" y="2.300" width="1.600" height="1.800" fill="#4466cc"/></svg>
<span class="t " style="left:760px;top:212px;font-size:13px;color:#3f89d8;line-height:16px;letter-spacing:0.275px;">Insertar</span>
<svg class="i" style="left:814px;top:212.5px;" width="16" height="16" viewBox="0 0 16 16"><rect x="2.500" y=".8" width="11" height="5.200" fill="#c9dbf0" stroke="#7f9cc4" stroke-width="1"/><path d="M3 1h10" stroke="#5f7fa8" stroke-width="1"/><rect x=".5" y="5.500" width="15" height="5" rx="1" fill="#5b8dd6" stroke="#4a72a8" stroke-width="1"/><path d="M2 7.300h12" stroke="#b9d0ec" stroke-width="1.400"/><path d="M3 10.500v4.500M5.300 10.500v4M7.600 10.500v4.500M9.900 10.500v4M12.200 10.500v4.500" stroke="#9aa2ac" stroke-width="1.700"/></svg>
<span class="t " style="left:834px;top:212px;font-size:13px;color:#3f89d8;line-height:16px;letter-spacing:0.022px;">Vaciar</span>
<svg class="i" style="left:879px;top:212.5px;" width="15" height="15" viewBox="0 0 16 16"><circle cx="8" cy="8" r="6.800" fill="#e4584e" stroke="#cf463c" stroke-width="1"/><path d="M2.800 6a5.500 5.500 0 0 1 10.400 0" fill="#ef8279" opacity=".75"/><rect x="4" y="6.800" width="8" height="2.600" rx=".6" fill="#fff"/></svg>
<span class="t " style="left:898px;top:212px;font-size:13px;color:#3f89d8;line-height:16px;letter-spacing:0.147px;">Eliminar</span>
<span class="t m" style="right:365px;top:212.5px;font-size:9.600px;color:#555;line-height:16px;-webkit-text-stroke:.2px;">1</span>
<span class="t " style="left:1038px;top:210.5px;font-size:13px;color:#555;line-height:16px;letter-spacing:-0.625px;">MyISAM</span>
<span class="t " style="left:1114px;top:210.5px;font-size:13px;color:#555;line-height:16px;letter-spacing:0.15px;">utf8_general_ci</span>
<span class="t m" style="right:82px;top:212.5px;font-size:9.600px;color:#3f89d8;line-height:16px;-webkit-text-stroke:.2px;">6.3 KB</span>
<div class="b" style="left:265px;top:241px;width:1118px;height:1px;background:#e2e6ea"></div>
<div class="cb" style="left:276px;top:256px"></div>
<span class="t " style="left:311px;top:254px;font-size:13px;color:#3f89d8;line-height:16px;letter-spacing:0.777px;">wp_links</span>
<svg class="i" style="left:472.7px;top:252.8px;" width="17.6" height="17.6" viewBox="0 0 16 16"><path d="M8 1.800l1.900 4.100 4.400.5-3.300 3.100.9 4.400L8 11.700l-3.900 2.200.9-4.400L1.700 6.400l4.400-.5z" fill="#bab7a9" stroke="#a9a698" stroke-width="2.200" stroke-linejoin="round"/><path d="M8 3.500l1.400 3 3.200.4-2.400 2.200.6 3.200L8 10.700l-2.800 1.600.6-3.200L3.400 6.900l3.200-.4z" fill="#c1beb0"/></svg>
<svg class="i" style="left:501.2px;top:253.9px;" width="16" height="16" viewBox="0 0 16 16"><rect x="1.500" y="1.500" width="13" height="13" fill="#f4f8fe" stroke="#a3badc"/><rect x="2" y="2" width="12" height="3" fill="#dbe7f7"/><path d="M2 3.500h11" stroke="#b9d3c4" stroke-width="1"/><path d="M2 7.500h12M2 10.500h12M5.500 5.500v9M9.500 5.500v9" stroke="#bfd2ec" stroke-width="1"/><path d="M2 5.500h12" stroke="#9db8de"/><path d="M1.500 1.500v13h13" fill="none" stroke="#6688bb"/></svg>
<span class="t " style="left:521px;top:254px;font-size:13px;color:#3f89d8;line-height:16px;letter-spacing:-0.132px;">Examinar</span>
<svg class="i" style="left:583px;top:254.5px;" width="16" height="16" viewBox="0 0 16 16"><rect x=".5" y="1.500" width="4.500" height="13" fill="#f4f8fc" stroke="#9db8dc" stroke-width="1"/><rect x="11.500" y="1.500" width="4" height="13" fill="#f4f8fc" stroke="#9db8dc" stroke-width="1"/><path d="M1 4.500h3.500M1 7.500h3.500M1 10.500h3.500M12 4.500h3M12 7.500h3M12 10.500h3" stroke="#b5c9e4" stroke-width="1"/><path d="M4 9.800l1.700 1.300L11.800 5" fill="none" stroke="#4a9f45" stroke-width="2" stroke-linecap="round" stroke-linejoin="round"/><path d="M11.500 6v8.500" stroke="#7f9cc4" stroke-width="1"/></svg>
<span class="t " style="left:603px;top:254px;font-size:13px;color:#3f89d8;line-height:16px;letter-spacing:0.194px;">Estructura</span>
<svg class="i" style="left:672px;top:254px;" width="16" height="16" viewBox="0 0 16 16"><circle cx="5.300" cy="5" r="4.200" fill="#d5e3f2" stroke="#e3ecf6" stroke-width="1"/><path d="M2.600 4.300a2.800 2.800 0 0 1 2.400-2" stroke="#fff" stroke-width="1.100" fill="none"/><path d="M10.800 10.800l1.700 1.700" stroke="#c9975a" stroke-width="3.200" stroke-linecap="round"/><path d="M10.200 3v7.400M6.500 6.700h7.400" stroke="#4d9e3d" stroke-width="2.300"/></svg>
<span class="t " style="left:692px;top:254px;font-size:13px;color:#3f89d8;line-height:16px;letter-spacing:-0.094px;">Buscar</span>
<svg class="i" style="left:740px;top:254.5px;" width="16" height="16" viewBox="0 0 16 16"><rect x="1.500" y="2" width="4" height="12" fill="#e4e4e4" stroke="#777" stroke-width="1"/><path d="M1 1.500h5.500M1 14.500h5.500" stroke="#111" stroke-width="1.700"/><path d="M1.500 5h4M1.500 8h4M1.500 11h4" stroke="#333" stroke-width="1"/><path d="M7 4.200l1.100 2.700 2.900 1.100-2.900 1.100-1.100 2.700-1.100-2.700L3 8l2.900-1.100z" fill="#5b4ad6" stroke="#4a3bc0" stroke-width=".6"/><rect x="11" y="6.500" width="3.500" height="3.500" fill="#f4d64e" stroke="#6b5a16" stroke-width="1"/><rect x="12" y="2.300" width="1.600" height="1.800" fill="#4466cc"/></svg>
<span class="t " style="left:760px;top:254px;font-size:13px;color:#3f89d8;line-height:16px;letter-spacing:0.275px;">Insertar</span>
<svg class="i" style="left:814px;top:254.5px;" width="16" height="16" viewBox="0 0 16 16"><rect x="2.500" y=".8" width="11" height="5.200" fill="#c9dbf0" stroke="#7f9cc4" stroke-width="1"/><path d="M3 1h10" stroke="#5f7fa8" stroke-width="1"/><rect x=".5" y="5.500" width="15" height="5" rx="1" fill="#5b8dd6" stroke="#4a72a8" stroke-width="1"/><path d="M2 7.300h12" stroke="#b9d0ec" stroke-width="1.400"/><path d="M3 10.500v4.500M5.300 10.500v4M7.600 10.500v4.500M9.900 10.500v4M12.200 10.500v4.500" stroke="#9aa2ac" stroke-width="1.700"/></svg>
<span class="t " style="left:834px;top:254px;font-size:13px;color:#3f89d8;line-height:16px;letter-spacing:0.022px;">Vaciar</span>
<svg class="i" style="left:879px;top:254.5px;" width="15" height="15" viewBox="0 0 16 16"><circle cx="8" cy="8" r="6.800" fill="#e4584e" stroke="#cf463c" stroke-width="1"/><path d="M2.800 6a5.500 5.500 0 0 1 10.400 0" fill="#ef8279" opacity=".75"/><rect x="4" y="6.800" width="8" height="2.600" rx=".6" fill="#fff"/></svg>
<span class="t " style="left:898px;top:254px;font-size:13px;color:#3f89d8;line-height:16px;letter-spacing:0.147px;">Eliminar</span>
<span class="t m" style="right:365px;top:254.5px;font-size:9.600px;color:#555;line-height:16px;-webkit-text-stroke:.2px;">10</span>
<span class="t " style="left:1038px;top:252.5px;font-size:13px;color:#555;line-height:16px;letter-spacing:-0.625px;">MyISAM</span>
<span class="t " style="left:1114px;top:252.5px;font-size:13px;color:#555;line-height:16px;letter-spacing:0.15px;">utf8_general_ci</span>
<span class="t m" style="right:82px;top:254.5px;font-size:9.600px;color:#3f89d8;line-height:16px;-webkit-text-stroke:.2px;">4.2 KB</span>
<div class="b" style="left:265px;top:283px;width:1118px;height:1px;background:#e2e6ea"></div>
<div class="cb" style="left:276px;top:298px"></div>
<span class="t " style="left:311px;top:296px;font-size:13px;color:#3f89d8;line-height:16px;letter-spacing:0.802px;">wp_options</span>
<svg class="i" style="left:472.7px;top:294.8px;" width="17.6" height="17.6" viewBox="0 0 16 16"><path d="M8 1.800l1.900 4.100 4.400.5-3.300 3.100.9 4.400L8 11.700l-3.900 2.200.9-4.400L1.700 6.400l4.400-.5z" fill="#bab7a9" stroke="#a9a698" stroke-width="2.200" stroke-linejoin="round"/><path d="M8 3.500l1.400 3 3.200.4-2.400 2.200.6 3.200L8 10.700l-2.800 1.600.6-3.200L3.400 6.900l3.200-.4z" fill="#c1beb0"/></svg>
<svg class="i" style="left:501.2px;top:295.9px;" width="16" height="16" viewBox="0 0 16 16"><rect x="1.500" y="1.500" width="13" height="13" fill="#f4f8fe" stroke="#a3badc"/><rect x="2" y="2" width="12" height="3" fill="#dbe7f7"/><path d="M2 3.500h11" stroke="#b9d3c4" stroke-width="1"/><path d="M2 7.500h12M2 10.500h12M5.500 5.500v9M9.500 5.500v9" stroke="#bfd2ec" stroke-width="1"/><path d="M2 5.500h12" stroke="#9db8de"/><path d="M1.500 1.500v13h13" fill="none" stroke="#6688bb"/></svg>
<span class="t " style="left:521px;top:296px;font-size:13px;color:#3f89d8;line-height:16px;letter-spacing:-0.132px;">Examinar</span>
<svg class="i" style="left:583px;top:296.5px;" width="16" height="16" viewBox="0 0 16 16"><rect x=".5" y="1.500" width="4.500" height="13" fill="#f4f8fc" stroke="#9db8dc" stroke-width="1"/><rect x="11.500" y="1.500" width="4" height="13" fill="#f4f8fc" stroke="#9db8dc" stroke-width="1"/><path d="M1 4.500h3.500M1 7.500h3.500M1 10.500h3.500M12 4.500h3M12 7.500h3M12 10.500h3" stroke="#b5c9e4" stroke-width="1"/><path d="M4 9.800l1.700 1.300L11.800 5" fill="none" stroke="#4a9f45" stroke-width="2" stroke-linecap="round" stroke-linejoin="round"/><path d="M11.500 6v8.500" stroke="#7f9cc4" stroke-width="1"/></svg>
<span class="t " style="left:603px;top:296px;font-size:13px;color:#3f89d8;line-height:16px;letter-spacing:0.194px;">Estructura</span>
<svg class="i" style="left:672px;top:296px;" width="16" height="16" viewBox="0 0 16 16"><circle cx="5.300" cy="5" r="4.200" fill="#d5e3f2" stroke="#e3ecf6" stroke-width="1"/><path d="M2.600 4.300a2.800 2.800 0 0 1 2.400-2" stroke="#fff" stroke-width="1.100" fill="none"/><path d="M10.800 10.800l1.700 1.700" stroke="#c9975a" stroke-width="3.200" stroke-linecap="round"/><path d="M10.200 3v7.400M6.500 6.700h7.400" stroke="#4d9e3d" stroke-width="2.300"/></svg>
<span class="t " style="left:692px;top:296px;font-size:13px;color:#3f89d8;line-height:16px;letter-spacing:-0.094px;">Buscar</span>
<svg class="i" style="left:740px;top:296.5px;" width="16" height="16" viewBox="0 0 16 16"><rect x="1.500" y="2" width="4" height="12" fill="#e4e4e4" stroke="#777" stroke-width="1"/><path d="M1 1.500h5.500M1 14.500h5.500" stroke="#111" stroke-width="1.700"/><path d="M1.500 5h4M1.500 8h4M1.500 11h4" stroke="#333" stroke-width="1"/><path d="M7 4.200l1.100 2.700 2.900 1.100-2.900 1.100-1.100 2.700-1.100-2.700L3 8l2.900-1.100z" fill="#5b4ad6" stroke="#4a3bc0" stroke-width=".6"/><rect x="11" y="6.500" width="3.500" height="3.500" fill="#f4d64e" stroke="#6b5a16" stroke-width="1"/><rect x="12" y="2.300" width="1.600" height="1.800" fill="#4466cc"/></svg>
<span class="t " style="left:760px;top:296px;font-size:13px;color:#3f89d8;line-height:16px;letter-spacing:0.275px;">Insertar</span>
<svg class="i" style="left:814px;top:296.5px;" width="16" height="16" viewBox="0 0 16 16"><rect x="2.500" y=".8" width="11" height="5.200" fill="#c9dbf0" stroke="#7f9cc4" stroke-width="1"/><path d="M3 1h10" stroke="#5f7fa8" stroke-width="1"/><rect x=".5" y="5.500" width="15" height="5" rx="1" fill="#5b8dd6" stroke="#4a72a8" stroke-width="1"/><path d="M2 7.300h12" stroke="#b9d0ec" stroke-width="1.400"/><path d="M3 10.500v4.500M5.300 10.500v4M7.600 10.500v4.500M9.900 10.500v4M12.200 10.500v4.500" stroke="#9aa2ac" stroke-width="1.700"/></svg>
<span class="t " style="left:834px;top:296px;font-size:13px;color:#3f89d8;line-height:16px;letter-spacing:0.022px;">Vaciar</span>
<svg class="i" style="left:879px;top:296.5px;" width="15" height="15" viewBox="0 0 16 16"><circle cx="8" cy="8" r="6.800" fill="#e4584e" stroke="#cf463c" stroke-width="1"/><path d="M2.800 6a5.500 5.500 0 0 1 10.400 0" fill="#ef8279" opacity=".75"/><rect x="4" y="6.800" width="8" height="2.600" rx=".6" fill="#fff"/></svg>
<span class="t " style="left:898px;top:296px;font-size:13px;color:#3f89d8;line-height:16px;letter-spacing:0.147px;">Eliminar</span>
<span class="t m" style="right:365px;top:296.5px;font-size:9.600px;color:#555;line-height:16px;-webkit-text-stroke:.2px;">213</span>
<span class="t " style="left:1038px;top:294.5px;font-size:13px;color:#555;line-height:16px;letter-spacing:-0.625px;">MyISAM</span>
<span class="t " style="left:1114px;top:294.5px;font-size:13px;color:#555;line-height:16px;letter-spacing:0.15px;">utf8_general_ci</span>
<span class="t m" style="right:82px;top:296.5px;font-size:9.600px;color:#3f89d8;line-height:16px;-webkit-text-stroke:.2px;">45.3 KB</span>
<div class="b" style="left:265px;top:325px;width:1118px;height:1px;background:#e2e6ea"></div>
<div class="cb" style="left:276px;top:340px"></div>
<span class="t " style="left:311px;top:338px;font-size:13px;color:#3f89d8;line-height:16px;letter-spacing:0.827px;">wp_postmeta</span>
<svg class="i" style="left:472.7px;top:336.8px;" width="17.6" height="17.6" viewBox="0 0 16 16"><path d="M8 1.800l1.900 4.100 4.400.5-3.300 3.100.9 4.400L8 11.700l-3.900 2.200.9-4.400L1.700 6.400l4.400-.5z" fill="#bab7a9" stroke="#a9a698" stroke-width="2.200" stroke-linejoin="round"/><path d="M8 3.500l1.400 3 3.200.4-2.400 2.200.6 3.200L8 10.700l-2.800 1.600.6-3.200L3.400 6.900l3.200-.4z" fill="#c1beb0"/></svg>
<svg class="i" style="left:501.2px;top:337.9px;" width="16" height="16" viewBox="0 0 16 16"><rect x="1.500" y="1.500" width="13" height="13" fill="#f4f8fe" stroke="#a3badc"/><rect x="2" y="2" width="12" height="3" fill="#dbe7f7"/><path d="M2 3.500h11" stroke="#b9d3c4" stroke-width="1"/><path d="M2 7.500h12M2 10.500h12M5.500 5.500v9M9.500 5.500v9" stroke="#bfd2ec" stroke-width="1"/><path d="M2 5.500h12" stroke="#9db8de"/><path d="M1.500 1.500v13h13" fill="none" stroke="#6688bb"/></svg>
<span class="t " style="left:521px;top:338px;font-size:13px;color:#3f89d8;line-height:16px;letter-spacing:-0.132px;">Examinar</span>
<svg class="i" style="left:583px;top:338.5px;" width="16" height="16" viewBox="0 0 16 16"><rect x=".5" y="1.500" width="4.500" height="13" fill="#f4f8fc" stroke="#9db8dc" stroke-width="1"/><rect x="11.500" y="1.500" width="4" height="13" fill="#f4f8fc" stroke="#9db8dc" stroke-width="1"/><path d="M1 4.500h3.500M1 7.500h3.500M1 10.500h3.500M12 4.500h3M12 7.500h3M12 10.500h3" stroke="#b5c9e4" stroke-width="1"/><path d="M4 9.800l1.700 1.300L11.800 5" fill="none" stroke="#4a9f45" stroke-width="2" stroke-linecap="round" stroke-linejoin="round"/><path d="M11.500 6v8.500" stroke="#7f9cc4" stroke-width="1"/></svg>
<span class="t " style="left:603px;top:338px;font-size:13px;color:#3f89d8;line-height:16px;letter-spacing:0.194px;">Estructura</span>
<svg class="i" style="left:672px;top:338px;" width="16" height="16" viewBox="0 0 16 16"><circle cx="5.300" cy="5" r="4.200" fill="#d5e3f2" stroke="#e3ecf6" stroke-width="1"/><path d="M2.600 4.300a2.800 2.800 0 0 1 2.400-2" stroke="#fff" stroke-width="1.100" fill="none"/><path d="M10.800 10.800l1.700 1.700" stroke="#c9975a" stroke-width="3.200" stroke-linecap="round"/><path d="M10.200 3v7.400M6.500 6.700h7.400" stroke="#4d9e3d" stroke-width="2.300"/></svg>
<span class="t " style="left:692px;top:338px;font-size:13px;color:#3f89d8;line-height:16px;letter-spacing:-0.094px;">Buscar</span>
<svg class="i" style="left:740px;top:338.5px;" width="16" height="16" viewBox="0 0 16 16"><rect x="1.500" y="2" width="4" height="12" fill="#e4e4e4" stroke="#777" stroke-width="1"/><path d="M1 1.500h5.500M1 14.500h5.500" stroke="#111" stroke-width="1.700"/><path d="M1.500 5h4M1.500 8h4M1.500 11h4" stroke="#333" stroke-width="1"/><path d="M7 4.200l1.100 2.700 2.900 1.100-2.900 1.100-1.100 2.700-1.100-2.700L3 8l2.900-1.100z" fill="#5b4ad6" stroke="#4a3bc0" stroke-width=".6"/><rect x="11" y="6.500" width="3.500" height="3.500" fill="#f4d64e" stroke="#6b5a16" stroke-width="1"/><rect x="12" y="2.300" width="1.600" height="1.800" fill="#4466cc"/></svg>
<span class="t " style="left:760px;top:338px;font-size:13px;color:#3f89d8;line-height:16px;letter-spacing:0.275px;">Insertar</span>
<svg class="i" style="left:814px;top:338.5px;" width="16" height="16" viewBox="0 0 16 16"><rect x="2.500" y=".8" width="11" height="5.200" fill="#c9dbf0" stroke="#7f9cc4" stroke-width="1"/><path d="M3 1h10" stroke="#5f7fa8" stroke-width="1"/><rect x=".5" y="5.500" width="15" height="5" rx="1" fill="#5b8dd6" stroke="#4a72a8" stroke-width="1"/><path d="M2 7.300h12" stroke="#b9d0ec" stroke-width="1.400"/><path d="M3 10.500v4.500M5.300 10.500v4M7.600 10.500v4.500M9.900 10.500v4M12.200 10.500v4.500" stroke="#9aa2ac" stroke-width="1.700"/></svg>
<span class="t " style="left:834px;top:338px;font-size:13px;color:#3f89d8;line-height:16px;letter-spacing:0.022px;">Vaciar</span>
<svg class="i" style="left:879px;top:338.5px;" width="15" height="15" viewBox="0 0 16 16"><circle cx="8" cy="8" r="6.800" fill="#e4584e" stroke="#cf463c" stroke-width="1"/><path d="M2.800 6a5.500 5.500 0 0 1 10.400 0" fill="#ef8279" opacity=".75"/><rect x="4" y="6.800" width="8" height="2.600" rx=".6" fill="#fff"/></svg>
<span class="t " style="left:898px;top:338px;font-size:13px;color:#3f89d8;line-height:16px;letter-spacing:0.147px;">Eliminar</span>
<span class="t m" style="right:365px;top:338.5px;font-size:9.600px;color:#555;line-height:16px;-webkit-text-stroke:.2px;">561</span>
<span class="t " style="left:1038px;top:336.5px;font-size:13px;color:#555;line-height:16px;letter-spacing:-0.625px;">MyISAM</span>
<span class="t " style="left:1114px;top:336.5px;font-size:13px;color:#555;line-height:16px;letter-spacing:0.15px;">utf8_general_ci</span>
<span class="t m" style="right:82px;top:338.5px;font-size:9.600px;color:#3f89d8;line-height:16px;-webkit-text-stroke:.2px;">71.8 KB</span>
<div class="b" style="left:265px;top:367px;width:1118px;height:1px;background:#e2e6ea"></div>
<div class="cb" style="left:276px;top:382px"></div>
<span class="t " style="left:311px;top:380px;font-size:13px;color:#3f89d8;line-height:16px;letter-spacing:0.74px;">wp_posts</span>
<svg class="i" style="left:472.7px;top:378.8px;" width="17.6" height="17.6" viewBox="0 0 16 16"><path d="M8 1.800l1.900 4.100 4.400.5-3.300 3.100.9 4.400L8 11.700l-3.900 2.200.9-4.400L1.700 6.400l4.400-.5z" fill="#bab7a9" stroke="#a9a698" stroke-width="2.200" stroke-linejoin="round"/><path d="M8 3.500l1.400 3 3.200.4-2.400 2.200.6 3.200L8 10.700l-2.800 1.600.6-3.200L3.400 6.900l3.200-.4z" fill="#c1beb0"/></svg>
<svg class="i" style="left:501.2px;top:379.9px;" width="16" height="16" viewBox="0 0 16 16"><rect x="1.500" y="1.500" width="13" height="13" fill="#f4f8fe" stroke="#a3badc"/><rect x="2" y="2" width="12" height="3" fill="#dbe7f7"/><path d="M2 3.500h11" stroke="#b9d3c4" stroke-width="1"/><path d="M2 7.500h12M2 10.500h12M5.500 5.500v9M9.500 5.500v9" stroke="#bfd2ec" stroke-width="1"/><path d="M2 5.500h12" stroke="#9db8de"/><path d="M1.500 1.500v13h13" fill="none" stroke="#6688bb"/></svg>
<span class="t " style="left:521px;top:380px;font-size:13px;color:#3f89d8;line-height:16px;letter-spacing:-0.132px;">Examinar</span>
<svg class="i" style="left:583px;top:380.5px;" width="16" height="16" viewBox="0 0 16 16"><rect x=".5" y="1.500" width="4.500" height="13" fill="#f4f8fc" stroke="#9db8dc" stroke-width="1"/><rect x="11.500" y="1.500" width="4" height="13" fill="#f4f8fc" stroke="#9db8dc" stroke-width="1"/><path d="M1 4.500h3.500M1 7.500h3.500M1 10.500h3.500M12 4.500h3M12 7.500h3M12 10.500h3" stroke="#b5c9e4" stroke-width="1"/><path d="M4 9.800l1.700 1.300L11.800 5" fill="none" stroke="#4a9f45" stroke-width="2" stroke-linecap="round" stroke-linejoin="round"/><path d="M11.500 6v8.500" stroke="#7f9cc4" stroke-width="1"/></svg>
<span class="t " style="left:603px;top:380px;font-size:13px;color:#3f89d8;line-height:16px;letter-spacing:0.194px;">Estructura</span>
<svg class="i" style="left:672px;top:380px;" width="16" height="16" viewBox="0 0 16 16"><circle cx="5.300" cy="5" r="4.200" fill="#d5e3f2" stroke="#e3ecf6" stroke-width="1"/><path d="M2.600 4.300a2.800 2.800 0 0 1 2.400-2" stroke="#fff" stroke-width="1.100" fill="none"/><path d="M10.800 10.800l1.700 1.700" stroke="#c9975a" stroke-width="3.200" stroke-linecap="round"/><path d="M10.200 3v7.400M6.500 6.700h7.400" stroke="#4d9e3d" stroke-width="2.300"/></svg>
<span class="t " style="left:692px;top:380px;font-size:13px;color:#3f89d8;line-height:16px;letter-spacing:-0.094px;">Buscar</span>
<svg class="i" style="left:740px;top:380.5px;" width="16" height="16" viewBox="0 0 16 16"><rect x="1.500" y="2" width="4" height="12" fill="#e4e4e4" stroke="#777" stroke-width="1"/><path d="M1 1.500h5.500M1 14.500h5.500" stroke="#111" stroke-width="1.700"/><path d="M1.500 5h4M1.500 8h4M1.500 11h4" stroke="#333" stroke-width="1"/><path d="M7 4.200l1.100 2.700 2.900 1.100-2.900 1.100-1.100 2.700-1.100-2.700L3 8l2.900-1.100z" fill="#5b4ad6" stroke="#4a3bc0" stroke-width=".6"/><rect x="11" y="6.500" width="3.500" height="3.500" fill="#f4d64e" stroke="#6b5a16" stroke-width="1"/><rect x="12" y="2.300" width="1.600" height="1.800" fill="#4466cc"/></svg>
<span class="t " style="left:760px;top:380px;font-size:13px;color:#3f89d8;line-height:16px;letter-spacing:0.275px;">Insertar</span>
<svg class="i" style="left:814px;top:380.5px;" width="16" height="16" viewBox="0 0 16 16"><rect x="2.500" y=".8" width="11" height="5.200" fill="#c9dbf0" stroke="#7f9cc4" stroke-width="1"/><path d="M3 1h10" stroke="#5f7fa8" stroke-width="1"/><rect x=".5" y="5.500" width="15" height="5" rx="1" fill="#5b8dd6" stroke="#4a72a8" stroke-width="1"/><path d="M2 7.300h12" stroke="#b9d0ec" stroke-width="1.400"/><path d="M3 10.500v4.500M5.300 10.500v4M7.600 10.500v4.500M9.900 10.500v4M12.200 10.500v4.500" stroke="#9aa2ac" stroke-width="1.700"/></svg>
<span class="t " style="left:834px;top:380px;font-size:13px;color:#3f89d8;line-height:16px;letter-spacing:0.022px;">Vaciar</span>
<svg class="i" style="left:879px;top:380.5px;" width="15" height="15" viewBox="0 0 16 16"><circle cx="8" cy="8" r="6.800" fill="#e4584e" stroke="#cf463c" stroke-width="1"/><path d="M2.800 6a5.500 5.500 0 0 1 10.400 0" fill="#ef8279" opacity=".75"/><rect x="4" y="6.800" width="8" height="2.600" rx=".6" fill="#fff"/></svg>
<span class="t " style="left:898px;top:380px;font-size:13px;color:#3f89d8;line-height:16px;letter-spacing:0.147px;">Eliminar</span>
<span class="t m" style="right:365px;top:380.5px;font-size:9.600px;color:#555;line-height:16px;-webkit-text-stroke:.2px;">151</span>
<span class="t " style="left:1038px;top:378.5px;font-size:13px;color:#555;line-height:16px;letter-spacing:-0.625px;">MyISAM</span>
<span class="t " style="left:1114px;top:378.5px;font-size:13px;color:#555;line-height:16px;letter-spacing:0.15px;">utf8_general_ci</span>
<span class="t m" style="right:82px;top:380.5px;font-size:9.600px;color:#3f89d8;line-height:16px;-webkit-text-stroke:.2px;">145.4 KB</span>
<div class="b" style="left:265px;top:409px;width:1118px;height:1px;background:#e2e6ea"></div>
<div class="cb" style="left:276px;top:424px"></div>
<span class="t " style="left:311px;top:422px;font-size:13px;color:#3f89d8;line-height:16px;letter-spacing:0.764px;">wp_statpress</span>
<svg class="i" style="left:472.7px;top:420.8px;" width="17.6" height="17.6" viewBox="0 0 16 16"><path d="M8 1.800l1.900 4.100 4.400.5-3.300 3.100.9 4.400L8 11.700l-3.900 2.200.9-4.400L1.700 6.400l4.400-.5z" fill="#bab7a9" stroke="#a9a698" stroke-width="2.200" stroke-linejoin="round"/><path d="M8 3.500l1.400 3 3.200.4-2.400 2.200.6 3.200L8 10.700l-2.800 1.600.6-3.200L3.400 6.900l3.200-.4z" fill="#c1beb0"/></svg>
<svg class="i" style="left:501.2px;top:421.9px;" width="16" height="16" viewBox="0 0 16 16"><rect x="1.500" y="1.500" width="13" height="13" fill="#f4f8fe" stroke="#a3badc"/><rect x="2" y="2" width="12" height="3" fill="#dbe7f7"/><path d="M2 3.500h11" stroke="#b9d3c4" stroke-width="1"/><path d="M2 7.500h12M2 10.500h12M5.500 5.500v9M9.500 5.500v9" stroke="#bfd2ec" stroke-width="1"/><path d="M2 5.500h12" stroke="#9db8de"/><path d="M1.500 1.500v13h13" fill="none" stroke="#6688bb"/></svg>
<span class="t " style="left:521px;top:422px;font-size:13px;color:#3f89d8;line-height:16px;letter-spacing:-0.132px;">Examinar</span>
<svg class="i" style="left:583px;top:422.5px;" width="16" height="16" viewBox="0 0 16 16"><rect x=".5" y="1.500" width="4.500" height="13" fill="#f4f8fc" stroke="#9db8dc" stroke-width="1"/><rect x="11.500" y="1.500" width="4" height="13" fill="#f4f8fc" stroke="#9db8dc" stroke-width="1"/><path d="M1 4.500h3.500M1 7.500h3.500M1 10.500h3.500M12 4.500h3M12 7.500h3M12 10.500h3" stroke="#b5c9e4" stroke-width="1"/><path d="M4 9.800l1.700 1.300L11.800 5" fill="none" stroke="#4a9f45" stroke-width="2" stroke-linecap="round" stroke-linejoin="round"/><path d="M11.500 6v8.500" stroke="#7f9cc4" stroke-width="1"/></svg>
<span class="t " style="left:603px;top:422px;font-size:13px;color:#3f89d8;line-height:16px;letter-spacing:0.194px;">Estructura</span>
<svg class="i" style="left:672px;top:422px;" width="16" height="16" viewBox="0 0 16 16"><circle cx="5.300" cy="5" r="4.200" fill="#d5e3f2" stroke="#e3ecf6" stroke-width="1"/><path d="M2.600 4.300a2.800 2.800 0 0 1 2.400-2" stroke="#fff" stroke-width="1.100" fill="none"/><path d="M10.800 10.800l1.700 1.700" stroke="#c9975a" stroke-width="3.200" stroke-linecap="round"/><path d="M10.200 3v7.400M6.500 6.700h7.400" stroke="#4d9e3d" stroke-width="2.300"/></svg>
<span class="t " style="left:692px;top:422px;font-size:13px;color:#3f89d8;line-height:16px;letter-spacing:-0.094px;">Buscar</span>
<svg class="i" style="left:740px;top:422.5px;" width="16" height="16" viewBox="0 0 16 16"><rect x="1.500" y="2" width="4" height="12" fill="#e4e4e4" stroke="#777" stroke-width="1"/><path d="M1 1.500h5.500M1 14.500h5.500" stroke="#111" stroke-width="1.700"/><path d="M1.500 5h4M1.500 8h4M1.500 11h4" stroke="#333" stroke-width="1"/><path d="M7 4.200l1.100 2.700 2.900 1.100-2.900 1.100-1.100 2.700-1.100-2.700L3 8l2.900-1.100z" fill="#5b4ad6" stroke="#4a3bc0" stroke-width=".6"/><rect x="11" y="6.500" width="3.500" height="3.500" fill="#f4d64e" stroke="#6b5a16" stroke-width="1"/><rect x="12" y="2.300" width="1.600" height="1.800" fill="#4466cc"/></svg>
<span class="t " style="left:760px;top:422px;font-size:13px;color:#3f89d8;line-height:16px;letter-spacing:0.275px;">Insertar</span>
<svg class="i" style="left:814px;top:422.5px;" width="16" height="16" viewBox="0 0 16 16"><rect x="2.500" y=".8" width="11" height="5.200" fill="#c9dbf0" stroke="#7f9cc4" stroke-width="1"/><path d="M3 1h10" stroke="#5f7fa8" stroke-width="1"/><rect x=".5" y="5.500" width="15" height="5" rx="1" fill="#5b8dd6" stroke="#4a72a8" stroke-width="1"/><path d="M2 7.300h12" stroke="#b9d0ec" stroke-width="1.400"/><path d="M3 10.500v4.500M5.300 10.500v4M7.600 10.500v4.500M9.900 10.500v4M12.200 10.500v4.500" stroke="#9aa2ac" stroke-width="1.700"/></svg>
<span class="t " style="left:834px;top:422px;font-size:13px;color:#3f89d8;line-height:16px;letter-spacing:0.022px;">Vaciar</span>
<svg class="i" style="left:879px;top:422.5px;" width="15" height="15" viewBox="0 0 16 16"><circle cx="8" cy="8" r="6.800" fill="#e4584e" stroke="#cf463c" stroke-width="1"/><path d="M2.800 6a5.500 5.500 0 0 1 10.400 0" fill="#ef8279" opacity=".75"/><rect x="4" y="6.800" width="8" height="2.600" rx=".6" fill="#fff"/></svg>
<span class="t " style="left:898px;top:422px;font-size:13px;color:#3f89d8;line-height:16px;letter-spacing:0.147px;">Eliminar</span>
<span class="t m" style="right:365px;top:422.5px;font-size:9.600px;color:#555;line-height:16px;-webkit-text-stroke:.2px;">201,063</span>
<span class="t " style="left:1038px;top:420.5px;font-size:13px;color:#555;line-height:16px;letter-spacing:-0.625px;">MyISAM</span>
<span class="t " style="left:1114px;top:420.5px;font-size:13px;color:#555;line-height:16px;letter-spacing:-0.077px;">latin1_spanish_ci</span>
<span class="t m" style="right:82px;top:422.5px;font-size:9.600px;color:#3f89d8;line-height:16px;-webkit-text-stroke:.2px;">33.9 MB</span>
<div class="b" style="left:265px;top:451px;width:1118px;height:1px;background:#e2e6ea"></div>
<div class="cb" style="left:276px;top:466px"></div>
<span class="t " style="left:311px;top:464px;font-size:13px;color:#3f89d8;line-height:16px;letter-spacing:0.906px;">wp_terms</span>
<svg class="i" style="left:472.7px;top:462.8px;" width="17.6" height="17.6" viewBox="0 0 16 16"><path d="M8 1.800l1.900 4.100 4.400.5-3.300 3.100.9 4.400L8 11.700l-3.900 2.200.9-4.400L1.700 6.400l4.400-.5z" fill="#bab7a9" stroke="#a9a698" stroke-width="2.200" stroke-linejoin="round"/><path d="M8 3.500l1.400 3 3.200.4-2.400 2.200.6 3.200L8 10.700l-2.800 1.600.6-3.200L3.400 6.900l3.200-.4z" fill="#c1beb0"/></svg>
<svg class="i" style="left:501.2px;top:463.9px;" width="16" height="16" viewBox="0 0 16 16"><rect x="1.500" y="1.500" width="13" height="13" fill="#f4f8fe" stroke="#a3badc"/><rect x="2" y="2" width="12" height="3" fill="#dbe7f7"/><path d="M2 3.500h11" stroke="#b9d3c4" stroke-width="1"/><path d="M2 7.500h12M2 10.500h12M5.500 5.500v9M9.500 5.500v9" stroke="#bfd2ec" stroke-width="1"/><path d="M2 5.500h12" stroke="#9db8de"/><path d="M1.500 1.500v13h13" fill="none" stroke="#6688bb"/></svg>
<span class="t " style="left:521px;top:464px;font-size:13px;color:#3f89d8;line-height:16px;letter-spacing:-0.132px;">Examinar</span>
<svg class="i" style="left:583px;top:464.5px;" width="16" height="16" viewBox="0 0 16 16"><rect x=".5" y="1.500" width="4.500" height="13" fill="#f4f8fc" stroke="#9db8dc" stroke-width="1"/><rect x="11.500" y="1.500" width="4" height="13" fill="#f4f8fc" stroke="#9db8dc" stroke-width="1"/><path d="M1 4.500h3.500M1 7.500h3.500M1 10.500h3.500M12 4.500h3M12 7.500h3M12 10.500h3" stroke="#b5c9e4" stroke-width="1"/><path d="M4 9.800l1.700 1.300L11.800 5" fill="none" stroke="#4a9f45" stroke-width="2" stroke-linecap="round" stroke-linejoin="round"/><path d="M11.500 6v8.500" stroke="#7f9cc4" stroke-width="1"/></svg>
<span class="t " style="left:603px;top:464px;font-size:13px;color:#3f89d8;line-height:16px;letter-spacing:0.194px;">Estructura</span>
<svg class="i" style="left:672px;top:464px;" width="16" height="16" viewBox="0 0 16 16"><circle cx="5.300" cy="5" r="4.200" fill="#d5e3f2" stroke="#e3ecf6" stroke-width="1"/><path d="M2.600 4.300a2.800 2.800 0 0 1 2.400-2" stroke="#fff" stroke-width="1.100" fill="none"/><path d="M10.800 10.800l1.700 1.700" stroke="#c9975a" stroke-width="3.200" stroke-linecap="round"/><path d="M10.200 3v7.400M6.500 6.700h7.400" stroke="#4d9e3d" stroke-width="2.300"/></svg>
<span class="t " style="left:692px;top:464px;font-size:13px;color:#3f89d8;line-height:16px;letter-spacing:-0.094px;">Buscar</span>
<svg class="i" style="left:740px;top:464.5px;" width="16" height="16" viewBox="0 0 16 16"><rect x="1.500" y="2" width="4" height="12" fill="#e4e4e4" stroke="#777" stroke-width="1"/><path d="M1 1.500h5.500M1 14.500h5.500" stroke="#111" stroke-width="1.700"/><path d="M1.500 5h4M1.500 8h4M1.500 11h4" stroke="#333" stroke-width="1"/><path d="M7 4.200l1.100 2.700 2.900 1.100-2.900 1.100-1.100 2.700-1.100-2.700L3 8l2.900-1.100z" fill="#5b4ad6" stroke="#4a3bc0" stroke-width=".6"/><rect x="11" y="6.500" width="3.500" height="3.500" fill="#f4d64e" stroke="#6b5a16" stroke-width="1"/><rect x="12" y="2.300" width="1.600" height="1.800" fill="#4466cc"/></svg>
<span class="t " style="left:760px;top:464px;font-size:13px;color:#3f89d8;line-height:16px;letter-spacing:0.275px;">Insertar</span>
<svg class="i" style="left:814px;top:464.5px;" width="16" height="16" viewBox="0 0 16 16"><rect x="2.500" y=".8" width="11" height="5.200" fill="#c9dbf0" stroke="#7f9cc4" stroke-width="1"/><path d="M3 1h10" stroke="#5f7fa8" stroke-width="1"/><rect x=".5" y="5.500" width="15" height="5" rx="1" fill="#5b8dd6" stroke="#4a72a8" stroke-width="1"/><path d="M2 7.300h12" stroke="#b9d0ec" stroke-width="1.400"/><path d="M3 10.500v4.500M5.300 10.500v4M7.600 10.500v4.500M9.900 10.500v4M12.200 10.500v4.500" stroke="#9aa2ac" stroke-width="1.700"/></svg>
<span class="t " style="left:834px;top:464px;font-size:13px;color:#3f89d8;line-height:16px;letter-spacing:0.022px;">Vaciar</span>
<svg class="i" style="left:879px;top:464.5px;" width="15" height="15" viewBox="0 0 16 16"><circle cx="8" cy="8" r="6.800" fill="#e4584e" stroke="#cf463c" stroke-width="1"/><path d="M2.800 6a5.500 5.500 0 0 1 10.400 0" fill="#ef8279" opacity=".75"/><rect x="4" y="6.800" width="8" height="2.600" rx=".6" fill="#fff"/></svg>
<span class="t " style="left:898px;top:464px;font-size:13px;color:#3f89d8;line-height:16px;letter-spacing:0.147px;">Eliminar</span>
<span class="t m" style="right:365px;top:464.5px;font-size:9.600px;color:#555;line-height:16px;-webkit-text-stroke:.2px;">143</span>
<span class="t " style="left:1038px;top:462.5px;font-size:13px;color:#555;line-height:16px;letter-spacing:-0.625px;">MyISAM</span>
<span class="t " style="left:1114px;top:462.5px;font-size:13px;color:#555;line-height:16px;letter-spacing:0.15px;">utf8_general_ci</span>
<span class="t m" style="right:82px;top:464.5px;font-size:9.600px;color:#3f89d8;line-height:16px;-webkit-text-stroke:.2px;">28.8 KB</span>
<div class="b" style="left:265px;top:493px;width:1118px;height:1px;background:#e2e6ea"></div>
<div class="cb" style="left:276px;top:508px"></div>
<span class="t " style="left:311px;top:506px;font-size:13px;color:#3f89d8;line-height:16px;letter-spacing:0.816px;">wp_term_relationships</span>
<svg class="i" style="left:472.7px;top:504.8px;" width="17.6" height="17.6" viewBox="0 0 16 16"><path d="M8 1.800l1.900 4.100 4.400.5-3.300 3.100.9 4.400L8 11.700l-3.900 2.200.9-4.400L1.700 6.400l4.400-.5z" fill="#bab7a9" stroke="#a9a698" stroke-width="2.200" stroke-linejoin="round"/><path d="M8 3.500l1.400 3 3.200.4-2.400 2.200.6 3.200L8 10.700l-2.800 1.600.6-3.200L3.400 6.900l3.200-.4z" fill="#c1beb0"/></svg>
<svg class="i" style="left:501.2px;top:505.9px;" width="16" height="16" viewBox="0 0 16 16"><rect x="1.500" y="1.500" width="13" height="13" fill="#f4f8fe" stroke="#a3badc"/><rect x="2" y="2" width="12" height="3" fill="#dbe7f7"/><path d="M2 3.500h11" stroke="#b9d3c4" stroke-width="1"/><path d="M2 7.500h12M2 10.500h12M5.500 5.500v9M9.500 5.500v9" stroke="#bfd2ec" stroke-width="1"/><path d="M2 5.500h12" stroke="#9db8de"/><path d="M1.500 1.500v13h13" fill="none" stroke="#6688bb"/></svg>
<span class="t " style="left:521px;top:506px;font-size:13px;color:#3f89d8;line-height:16px;letter-spacing:-0.132px;">Examinar</span>
<svg class="i" style="left:583px;top:506.5px;" width="16" height="16" viewBox="0 0 16 16"><rect x=".5" y="1.500" width="4.500" height="13" fill="#f4f8fc" stroke="#9db8dc" stroke-width="1"/><rect x="11.500" y="1.500" width="4" height="13" fill="#f4f8fc" stroke="#9db8dc" stroke-width="1"/><path d="M1 4.500h3.500M1 7.500h3.500M1 10.500h3.500M12 4.500h3M12 7.500h3M12 10.500h3" stroke="#b5c9e4" stroke-width="1"/><path d="M4 9.800l1.700 1.300L11.800 5" fill="none" stroke="#4a9f45" stroke-width="2" stroke-linecap="round" stroke-linejoin="round"/><path d="M11.500 6v8.500" stroke="#7f9cc4" stroke-width="1"/></svg>
<span class="t " style="left:603px;top:506px;font-size:13px;color:#3f89d8;line-height:16px;letter-spacing:0.194px;">Estructura</span>
<svg class="i" style="left:672px;top:506px;" width="16" height="16" viewBox="0 0 16 16"><circle cx="5.300" cy="5" r="4.200" fill="#d5e3f2" stroke="#e3ecf6" stroke-width="1"/><path d="M2.600 4.300a2.800 2.800 0 0 1 2.400-2" stroke="#fff" stroke-width="1.100" fill="none"/><path d="M10.800 10.800l1.700 1.700" stroke="#c9975a" stroke-width="3.200" stroke-linecap="round"/><path d="M10.200 3v7.400M6.500 6.700h7.400" stroke="#4d9e3d" stroke-width="2.300"/></svg>
<span class="t " style="left:692px;top:506px;font-size:13px;color:#3f89d8;line-height:16px;letter-spacing:-0.094px;">Buscar</span>
<svg class="i" style="left:740px;top:506.5px;" width="16" height="16" viewBox="0 0 16 16"><rect x="1.500" y="2" width="4" height="12" fill="#e4e4e4" stroke="#777" stroke-width="1"/><path d="M1 1.500h5.500M1 14.500h5.500" stroke="#111" stroke-width="1.700"/><path d="M1.500 5h4M1.500 8h4M1.500 11h4" stroke="#333" stroke-width="1"/><path d="M7 4.200l1.100 2.700 2.900 1.100-2.900 1.100-1.100 2.700-1.100-2.700L3 8l2.900-1.100z" fill="#5b4ad6" stroke="#4a3bc0" stroke-width=".6"/><rect x="11" y="6.500" width="3.500" height="3.500" fill="#f4d64e" stroke="#6b5a16" stroke-width="1"/><rect x="12" y="2.300" width="1.600" height="1.800" fill="#4466cc"/></svg>
<span class="t " style="left:760px;top:506px;font-size:13px;color:#3f89d8;line-height:16px;letter-spacing:0.275px;">Insertar</span>
<svg class="i" style="left:814px;top:506.5px;" width="16" height="16" viewBox="0 0 16 16"><rect x="2.500" y=".8" width="11" height="5.200" fill="#c9dbf0" stroke="#7f9cc4" stroke-width="1"/><path d="M3 1h10" stroke="#5f7fa8" stroke-width="1"/><rect x=".5" y="5.500" width="15" height="5" rx="1" fill="#5b8dd6" stroke="#4a72a8" stroke-width="1"/><path d="M2 7.300h12" stroke="#b9d0ec" stroke-width="1.400"/><path d="M3 10.500v4.500M5.300 10.500v4M7.600 10.500v4.500M9.900 10.500v4M12.200 10.500v4.500" stroke="#9aa2ac" stroke-width="1.700"/></svg>
<span class="t " style="left:834px;top:506px;font-size:13px;color:#3f89d8;line-height:16px;letter-spacing:0.022px;">Vaciar</span>
<svg class="i" style="left:879px;top:506.5px;" width="15" height="15" viewBox="0 0 16 16"><circle cx="8" cy="8" r="6.800" fill="#e4584e" stroke="#cf463c" stroke-width="1"/><path d="M2.800 6a5.500 5.500 0 0 1 10.400 0" fill="#ef8279" opacity=".75"/><rect x="4" y="6.800" width="8" height="2.600" rx=".6" fill="#fff"/></svg>
<span class="t " style="left:898px;top:506px;font-size:13px;color:#3f89d8;line-height:16px;letter-spacing:0.147px;">Eliminar</span>
<span class="t m" style="right:365px;top:506.5px;font-size:9.600px;color:#555;line-height:16px;-webkit-text-stroke:.2px;">174</span>
<span class="t " style="left:1038px;top:504.5px;font-size:13px;color:#555;line-height:16px;letter-spacing:-0.625px;">MyISAM</span>
<span class="t " style="left:1114px;top:504.5px;font-size:13px;color:#555;line-height:16px;letter-spacing:0.15px;">utf8_general_ci</span>
<span class="t m" style="right:82px;top:506.5px;font-size:9.600px;color:#3f89d8;line-height:16px;-webkit-text-stroke:.2px;">14.6 KB</span>
<div class="b" style="left:265px;top:535px;width:1118px;height:1px;background:#e2e6ea"></div>
<div class="cb" style="left:276px;top:550px"></div>
<span class="t " style="left:311px;top:548px;font-size:13px;color:#3f89d8;line-height:16px;letter-spacing:0.903px;">wp_term_taxonomy</span>
<svg class="i" style="left:472.7px;top:546.8px;" width="17.6" height="17.6" viewBox="0 0 16 16"><path d="M8 1.800l1.900 4.100 4.400.5-3.300 3.100.9 4.400L8 11.700l-3.900 2.200.9-4.400L1.700 6.400l4.400-.5z" fill="#bab7a9" stroke="#a9a698" stroke-width="2.200" stroke-linejoin="round"/><path d="M8 3.500l1.400 3 3.200.4-2.400 2.200.6 3.200L8 10.700l-2.800 1.600.6-3.200L3.400 6.900l3.200-.4z" fill="#c1beb0"/></svg>
<svg class="i" style="left:501.2px;top:547.9px;" width="16" height="16" viewBox="0 0 16 16"><rect x="1.500" y="1.500" width="13" height="13" fill="#f4f8fe" stroke="#a3badc"/><rect x="2" y="2" width="12" height="3" fill="#dbe7f7"/><path d="M2 3.500h11" stroke="#b9d3c4" stroke-width="1"/><path d="M2 7.500h12M2 10.500h12M5.500 5.500v9M9.500 5.500v9" stroke="#bfd2ec" stroke-width="1"/><path d="M2 5.500h12" stroke="#9db8de"/><path d="M1.500 1.500v13h13" fill="none" stroke="#6688bb"/></svg>
<span class="t " style="left:521px;top:548px;font-size:13px;color:#3f89d8;line-height:16px;letter-spacing:-0.132px;">Examinar</span>
<svg class="i" style="left:583px;top:548.5px;" width="16" height="16" viewBox="0 0 16 16"><rect x=".5" y="1.500" width="4.500" height="13" fill="#f4f8fc" stroke="#9db8dc" stroke-width="1"/><rect x="11.500" y="1.500" width="4" height="13" fill="#f4f8fc" stroke="#9db8dc" stroke-width="1"/><path d="M1 4.500h3.500M1 7.500h3.500M1 10.500h3.500M12 4.500h3M12 7.500h3M12 10.500h3" stroke="#b5c9e4" stroke-width="1"/><path d="M4 9.800l1.700 1.300L11.800 5" fill="none" stroke="#4a9f45" stroke-width="2" stroke-linecap="round" stroke-linejoin="round"/><path d="M11.500 6v8.500" stroke="#7f9cc4" stroke-width="1"/></svg>
<span class="t " style="left:603px;top:548px;font-size:13px;color:#3f89d8;line-height:16px;letter-spacing:0.194px;">Estructura</span>
<svg class="i" style="left:672px;top:548px;" width="16" height="16" viewBox="0 0 16 16"><circle cx="5.300" cy="5" r="4.200" fill="#d5e3f2" stroke="#e3ecf6" stroke-width="1"/><path d="M2.600 4.300a2.800 2.800 0 0 1 2.400-2" stroke="#fff" stroke-width="1.100" fill="none"/><path d="M10.800 10.800l1.700 1.700" stroke="#c9975a" stroke-width="3.200" stroke-linecap="round"/><path d="M10.200 3v7.400M6.500 6.700h7.400" stroke="#4d9e3d" stroke-width="2.300"/></svg>
<span class="t " style="left:692px;top:548px;font-size:13px;color:#3f89d8;line-height:16px;letter-spacing:-0.094px;">Buscar</span>
<svg class="i" style="left:740px;top:548.5px;" width="16" height="16" viewBox="0 0 16 16"><rect x="1.500" y="2" width="4" height="12" fill="#e4e4e4" stroke="#777" stroke-width="1"/><path d="M1 1.500h5.500M1 14.500h5.500" stroke="#111" stroke-width="1.700"/><path d="M1.500 5h4M1.500 8h4M1.500 11h4" stroke="#333" stroke-width="1"/><path d="M7 4.200l1.100 2.700 2.900 1.100-2.900 1.100-1.100 2.700-1.100-2.700L3 8l2.900-1.100z" fill="#5b4ad6" stroke="#4a3bc0" stroke-width=".6"/><rect x="11" y="6.500" width="3.500" height="3.500" fill="#f4d64e" stroke="#6b5a16" stroke-width="1"/><rect x="12" y="2.300" width="1.600" height="1.800" fill="#4466cc"/></svg>
<span class="t " style="left:760px;top:548px;font-size:13px;color:#3f89d8;line-height:16px;letter-spacing:0.275px;">Insertar</span>
<svg class="i" style="left:814px;top:548.5px;" width="16" height="16" viewBox="0 0 16 16"><rect x="2.500" y=".8" width="11" height="5.200" fill="#c9dbf0" stroke="#7f9cc4" stroke-width="1"/><path d="M3 1h10" stroke="#5f7fa8" stroke-width="1"/><rect x=".5" y="5.500" width="15" height="5" rx="1" fill="#5b8dd6" stroke="#4a72a8" stroke-width="1"/><path d="M2 7.300h12" stroke="#b9d0ec" stroke-width="1.400"/><path d="M3 10.500v4.500M5.300 10.500v4M7.600 10.500v4.500M9.900 10.500v4M12.200 10.500v4.500" stroke="#9aa2ac" stroke-width="1.700"/></svg>
<span class="t " style="left:834px;top:548px;font-size:13px;color:#3f89d8;line-height:16px;letter-spacing:0.022px;">Vaciar</span>
<svg class="i" style="left:879px;top:548.5px;" width="15" height="15" viewBox="0 0 16 16"><circle cx="8" cy="8" r="6.800" fill="#e4584e" stroke="#cf463c" stroke-width="1"/><path d="M2.800 6a5.500 5.500 0 0 1 10.400 0" fill="#ef8279" opacity=".75"/><rect x="4" y="6.800" width="8" height="2.600" rx=".6" fill="#fff"/></svg>
<span class="t " style="left:898px;top:548px;font-size:13px;color:#3f89d8;line-height:16px;letter-spacing:0.147px;">Eliminar</span>
<span class="t m" style="right:365px;top:548.5px;font-size:9.600px;color:#555;line-height:16px;-webkit-text-stroke:.2px;">145</span>
<span class="t " style="left:1038px;top:546.5px;font-size:13px;color:#555;line-height:16px;letter-spacing:-0.625px;">MyISAM</span>
<span class="t " style="left:1114px;top:546.5px;font-size:13px;color:#555;line-height:16px;letter-spacing:0.15px;">utf8_general_ci</span>
<span class="t m" style="right:82px;top:548.5px;font-size:9.600px;color:#3f89d8;line-height:16px;-webkit-text-stroke:.2px;">14.8 KB</span>
<div class="b" style="left:265px;top:577px;width:1118px;height:1px;background:#e2e6ea"></div>
<div class="cb" style="left:276px;top:592px"></div>
<span class="t " style="left:311px;top:590px;font-size:13px;color:#3f89d8;line-height:16px;letter-spacing:0.795px;">wp_usermeta</span>
<svg class="i" style="left:472.7px;top:588.8px;" width="17.6" height="17.6" viewBox="0 0 16 16"><path d="M8 1.800l1.900 4.100 4.400.5-3.300 3.100.9 4.400L8 11.700l-3.900 2.200.9-4.400L1.700 6.400l4.400-.5z" fill="#bab7a9" stroke="#a9a698" stroke-width="2.200" stroke-linejoin="round"/><path d="M8 3.500l1.400 3 3.200.4-2.400 2.200.6 3.200L8 10.700l-2.800 1.600.6-3.200L3.400 6.900l3.200-.4z" fill="#c1beb0"/></svg>
<svg class="i" style="left:501.2px;top:589.9px;" width="16" height="16" viewBox="0 0 16 16"><rect x="1.500" y="1.500" width="13" height="13" fill="#f4f8fe" stroke="#a3badc"/><rect x="2" y="2" width="12" height="3" fill="#dbe7f7"/><path d="M2 3.500h11" stroke="#b9d3c4" stroke-width="1"/><path d="M2 7.500h12M2 10.500h12M5.500 5.500v9M9.500 5.500v9" stroke="#bfd2ec" stroke-width="1"/><path d="M2 5.500h12" stroke="#9db8de"/><path d="M1.500 1.500v13h13" fill="none" stroke="#6688bb"/></svg>
<span class="t " style="left:521px;top:590px;font-size:13px;color:#3f89d8;line-height:16px;letter-spacing:-0.132px;">Examinar</span>
<svg class="i" style="left:583px;top:590.5px;" width="16" height="16" viewBox="0 0 16 16"><rect x=".5" y="1.500" width="4.500" height="13" fill="#f4f8fc" stroke="#9db8dc" stroke-width="1"/><rect x="11.500" y="1.500" width="4" height="13" fill="#f4f8fc" stroke="#9db8dc" stroke-width="1"/><path d="M1 4.500h3.500M1 7.500h3.500M1 10.500h3.500M12 4.500h3M12 7.500h3M12 10.500h3" stroke="#b5c9e4" stroke-width="1"/><path d="M4 9.800l1.700 1.300L11.800 5" fill="none" stroke="#4a9f45" stroke-width="2" stroke-linecap="round" stroke-linejoin="round"/><path d="M11.500 6v8.500" stroke="#7f9cc4" stroke-width="1"/></svg>
<span class="t " style="left:603px;top:590px;font-size:13px;color:#3f89d8;line-height:16px;letter-spacing:0.194px;">Estructura</span>
<svg class="i" style="left:672px;top:590px;" width="16" height="16" viewBox="0 0 16 16"><circle cx="5.300" cy="5" r="4.200" fill="#d5e3f2" stroke="#e3ecf6" stroke-width="1"/><path d="M2.600 4.300a2.800 2.800 0 0 1 2.400-2" stroke="#fff" stroke-width="1.100" fill="none"/><path d="M10.800 10.800l1.700 1.700" stroke="#c9975a" stroke-width="3.200" stroke-linecap="round"/><path d="M10.200 3v7.400M6.500 6.700h7.400" stroke="#4d9e3d" stroke-width="2.300"/></svg>
<span class="t " style="left:692px;top:590px;font-size:13px;color:#3f89d8;line-height:16px;letter-spacing:-0.094px;">Buscar</span>
<svg class="i" style="left:740px;top:590.5px;" width="16" height="16" viewBox="0 0 16 16"><rect x="1.500" y="2" width="4" height="12" fill="#e4e4e4" stroke="#777" stroke-width="1"/><path d="M1 1.500h5.500M1 14.500h5.500" stroke="#111" stroke-width="1.700"/><path d="M1.500 5h4M1.500 8h4M1.500 11h4" stroke="#333" stroke-width="1"/><path d="M7 4.200l1.100 2.700 2.900 1.100-2.900 1.100-1.100 2.700-1.100-2.700L3 8l2.900-1.100z" fill="#5b4ad6" stroke="#4a3bc0" stroke-width=".6"/><rect x="11" y="6.500" width="3.500" height="3.500" fill="#f4d64e" stroke="#6b5a16" stroke-width="1"/><rect x="12" y="2.300" width="1.600" height="1.800" fill="#4466cc"/></svg>
<span class="t " style="left:760px;top:590px;font-size:13px;color:#3f89d8;line-height:16px;letter-spacing:0.275px;">Insertar</span>
<svg class="i" style="left:814px;top:590.5px;" width="16" height="16" viewBox="0 0 16 16"><rect x="2.500" y=".8" width="11" height="5.200" fill="#c9dbf0" stroke="#7f9cc4" stroke-width="1"/><path d="M3 1h10" stroke="#5f7fa8" stroke-width="1"/><rect x=".5" y="5.500" width="15" height="5" rx="1" fill="#5b8dd6" stroke="#4a72a8" stroke-width="1"/><path d="M2 7.300h12" stroke="#b9d0ec" stroke-width="1.400"/><path d="M3 10.500v4.500M5.300 10.500v4M7.600 10.500v4.500M9.900 10.500v4M12.200 10.500v4.500" stroke="#9aa2ac" stroke-width="1.700"/></svg>
<span class="t " style="left:834px;top:590px;font-size:13px;color:#3f89d8;line-height:16px;letter-spacing:0.022px;">Vaciar</span>
<svg class="i" style="left:879px;top:590.5px;" width="15" height="15" viewBox="0 0 16 16"><circle cx="8" cy="8" r="6.800" fill="#e4584e" stroke="#cf463c" stroke-width="1"/><path d="M2.800 6a5.500 5.500 0 0 1 10.400 0" fill="#ef8279" opacity=".75"/><rect x="4" y="6.800" width="8" height="2.600" rx=".6" fill="#fff"/></svg>
<span class="t " style="left:898px;top:590px;font-size:13px;color:#3f89d8;line-height:16px;letter-spacing:0.147px;">Eliminar</span>
<span class="t m" style="right:365px;top:590.5px;font-size:9.600px;color:#555;line-height:16px;-webkit-text-stroke:.2px;">22</span>
<span class="t " style="left:1038px;top:588.5px;font-size:13px;color:#555;line-height:16px;letter-spacing:-0.625px;">MyISAM</span>
<span class="t " style="left:1114px;top:588.5px;font-size:13px;color:#555;line-height:16px;letter-spacing:0.15px;">utf8_general_ci</span>
<span class="t m" style="right:82px;top:590.5px;font-size:9.600px;color:#3f89d8;line-height:16px;-webkit-text-stroke:.2px;">8.3 KB</span>
<div class="b" style="left:265px;top:619px;width:1118px;height:1px;background:#e2e6ea"></div>
<div class="cb" style="left:276px;top:634px"></div>
<span class="t " style="left:311px;top:632px;font-size:13px;color:#3f89d8;line-height:16px;letter-spacing:0.637px;">wp_users</span>
<svg class="i" style="left:472.7px;top:630.8px;" width="17.6" height="17.6" viewBox="0 0 16 16"><path d="M8 1.800l1.900 4.100 4.400.5-3.300 3.100.9 4.400L8 11.700l-3.900 2.200.9-4.400L1.700 6.400l4.400-.5z" fill="#bab7a9" stroke="#a9a698" stroke-width="2.200" stroke-linejoin="round"/><path d="M8 3.500l1.400 3 3.200.4-2.400 2.200.6 3.200L8 10.700l-2.800 1.600.6-3.200L3.400 6.900l3.200-.4z" fill="#c1beb0"/></svg>
<svg class="i" style="left:501.2px;top:631.9px;" width="16" height="16" viewBox="0 0 16 16"><rect x="1.500" y="1.500" width="13" height="13" fill="#f4f8fe" stroke="#a3badc"/><rect x="2" y="2" width="12" height="3" fill="#dbe7f7"/><path d="M2 3.500h11" stroke="#b9d3c4" stroke-width="1"/><path d="M2 7.500h12M2 10.500h12M5.500 5.500v9M9.500 5.500v9" stroke="#bfd2ec" stroke-width="1"/><path d="M2 5.500h12" stroke="#9db8de"/><path d="M1.500 1.500v13h13" fill="none" stroke="#6688bb"/></svg>
<span class="t " style="left:521px;top:632px;font-size:13px;color:#3f89d8;line-height:16px;letter-spacing:-0.132px;">Examinar</span>
<svg class="i" style="left:583px;top:632.5px;" width="16" height="16" viewBox="0 0 16 16"><rect x=".5" y="1.500" width="4.500" height="13" fill="#f4f8fc" stroke="#9db8dc" stroke-width="1"/><rect x="11.500" y="1.500" width="4" height="13" fill="#f4f8fc" stroke="#9db8dc" stroke-width="1"/><path d="M1 4.500h3.500M1 7.500h3.500M1 10.500h3.500M12 4.500h3M12 7.500h3M12 10.500h3" stroke="#b5c9e4" stroke-width="1"/><path d="M4 9.800l1.700 1.300L11.800 5" fill="none" stroke="#4a9f45" stroke-width="2" stroke-linecap="round" stroke-linejoin="round"/><path d="M11.500 6v8.500" stroke="#7f9cc4" stroke-width="1"/></svg>
<span class="t " style="left:603px;top:632px;font-size:13px;color:#3f89d8;line-height:16px;letter-spacing:0.194px;">Estructura</span>
<svg class="i" style="left:672px;top:632px;" width="16" height="16" viewBox="0 0 16 16"><circle cx="5.300" cy="5" r="4.200" fill="#d5e3f2" stroke="#e3ecf6" stroke-width="1"/><path d="M2.600 4.300a2.800 2.800 0 0 1 2.400-2" stroke="#fff" stroke-width="1.100" fill="none"/><path d="M10.800 10.800l1.700 1.700" stroke="#c9975a" stroke-width="3.200" stroke-linecap="round"/><path d="M10.200 3v7.400M6.500 6.700h7.400" stroke="#4d9e3d" stroke-width="2.300"/></svg>
<span class="t " style="left:692px;top:632px;font-size:13px;color:#3f89d8;line-height:16px;letter-spacing:-0.094px;">Buscar</span>
<svg class="i" style="left:740px;top:632.5px;" width="16" height="16" viewBox="0 0 16 16"><rect x="1.500" y="2" width="4" height="12" fill="#e4e4e4" stroke="#777" stroke-width="1"/><path d="M1 1.500h5.500M1 14.500h5.500" stroke="#111" stroke-width="1.700"/><path d="M1.500 5h4M1.500 8h4M1.500 11h4" stroke="#333" stroke-width="1"/><path d="M7 4.200l1.100 2.700 2.900 1.100-2.900 1.100-1.100 2.700-1.100-2.700L3 8l2.900-1.100z" fill="#5b4ad6" stroke="#4a3bc0" stroke-width=".6"/><rect x="11" y="6.500" width="3.500" height="3.500" fill="#f4d64e" stroke="#6b5a16" stroke-width="1"/><rect x="12" y="2.300" width="1.600" height="1.800" fill="#4466cc"/></svg>
<span class="t " style="left:760px;top:632px;font-size:13px;color:#3f89d8;line-height:16px;letter-spacing:0.275px;">Insertar</span>
<svg class="i" style="left:814px;top:632.5px;" width="16" height="16" viewBox="0 0 16 16"><rect x="2.500" y=".8" width="11" height="5.200" fill="#c9dbf0" stroke="#7f9cc4" stroke-width="1"/><path d="M3 1h10" stroke="#5f7fa8" stroke-width="1"/><rect x=".5" y="5.500" width="15" height="5" rx="1" fill="#5b8dd6" stroke="#4a72a8" stroke-width="1"/><path d="M2 7.300h12" stroke="#b9d0ec" stroke-width="1.400"/><path d="M3 10.500v4.500M5.300 10.500v4M7.600 10.500v4.500M9.900 10.500v4M12.200 10.500v4.500" stroke="#9aa2ac" stroke-width="1.700"/></svg>
<span class="t " style="left:834px;top:632px;font-size:13px;color:#3f89d8;line-height:16px;letter-spacing:0.022px;">Vaciar</span>
<svg class="i" style="left:879px;top:632.5px;" width="15" height="15" viewBox="0 0 16 16"><circle cx="8" cy="8" r="6.800" fill="#e4584e" stroke="#cf463c" stroke-width="1"/><path d="M2.800 6a5.500 5.500 0 0 1 10.400 0" fill="#ef8279" opacity=".75"/><rect x="4" y="6.800" width="8" height="2.600" rx=".6" fill="#fff"/></svg>
<span class="t " style="left:898px;top:632px;font-size:13px;color:#3f89d8;line-height:16px;letter-spacing:0.147px;">Eliminar</span>
<span class="t m" style="right:365px;top:632.5px;font-size:9.600px;color:#555;line-height:16px;-webkit-text-stroke:.2px;">1</span>
<span class="t " style="left:1038px;top:630.5px;font-size:13px;color:#555;line-height:16px;letter-spacing:-0.625px;">MyISAM</span>
<span class="t " style="left:1114px;top:630.5px;font-size:13px;color:#555;line-height:16px;letter-spacing:0.15px;">utf8_general_ci</span>
<span class="t m" style="right:82px;top:632.5px;font-size:9.600px;color:#3f89d8;line-height:16px;-webkit-text-stroke:.2px;">4.1 KB</span>
<span class="t " style="left:311px;top:673.5px;font-size:13px;color:#5a5a5a;line-height:16px;letter-spacing:0.404px;">12 tablas</span>
<span class="t " style="left:482px;top:673.5px;font-size:13px;color:#5a5a5a;line-height:16px;letter-spacing:0.64px;">Número de filas</span>
<span class="t m" style="right:365px;top:673.800px;font-size:11px;color:#555;line-height:16px">202,488</span>
<span class="t " style="left:1039px;top:673px;font-size:13px;color:#5a5a5a;line-height:16px;letter-spacing:0.375px;">MyISAM</span>
<span class="t " style="left:1115px;top:673px;font-size:13px;color:#5a5a5a;line-height:16px;letter-spacing:0.517px;">latin1_spanish_ci</span>
<span class="t m" style="right:82px;top:673.800px;font-size:11px;color:#555;line-height:16px">34.3 MB</span>
<svg class="i" style="left:278px;top:724px;" width="30" height="17" viewBox="0 0 30 17"><path d="M5.500 4v11.500H29" fill="none" stroke="#111" stroke-width="1.300"/><path d="M1 6l4.500-5.500L10 6z" fill="#111"/></svg>
<div class="cb" style="left:325px;top:726px"></div>
<span class="t " style="left:347.5px;top:724.8px;font-size:13px;color:#3f89d8;line-height:16px;letter-spacing:0.044px;">Seleccionar todo</span>
<div class="b" style="left:492px;top:714px;width:309px;height:34px;border:1px solid #ccc;border-radius:2px;background:#fff"></div>
<span class="t " style="left:509px;top:723px;font-size:14.4px;color:#626262;line-height:18px;">Para los elementos que están marcados:</span>
<svg class="i" style="left:788.5px;top:728px;" width="6" height="6.5" viewBox="0 0 6 6.5"><path d="M0 0h6L3 6.500z" fill="#444"/></svg>
</main>
<svg class="i" style="left:0;top:0;pointer-events:none" width="1383" height="774" viewBox="0 0 1383 774">
<g fill="none" stroke="#ed1c24" stroke-linecap="round" stroke-linejoin="round">
<path d="M834 176L947 86" stroke-width="4.200"/>
<path d="M841 178L940 101" stroke-width="2.600" opacity=".9"/>
<path d="M830 190L950 88" stroke-width="2.400"/>
<path d="M826 198L951 90" stroke-width="1.800" opacity=".9"/>
<path d="M822 204L954 86" stroke-width="2.600"/>
<path d="M874 101L958 80" stroke-width="5"/>
<path d="M893 106L946 91" stroke-width="3" opacity=".9"/>
<path d="M905 107L940 97" stroke-width="2" opacity=".8"/>
<path d="M925 90L955 82L935 106z" fill="#ed1c24" stroke-width="2" opacity=".9"/>
<path d="M958 80L937 147" stroke-width="5"/>
<path d="M951 94L934 143" stroke-width="3.400" opacity=".9"/>
<path d="M102.500 255.500Q93 340 83.500 454" stroke-width="3"/>
<path d="M101.500 262Q98 300 94.500 335" stroke-width="2" opacity=".9"/>
<path d="M102.500 256L72 312" stroke-width="3.400"/>
<path d="M103 256L117 322" stroke-width="3"/>
<path d="M63 319.500L117 315" stroke-width="3.400"/>
</g></svg>
</body></html>
